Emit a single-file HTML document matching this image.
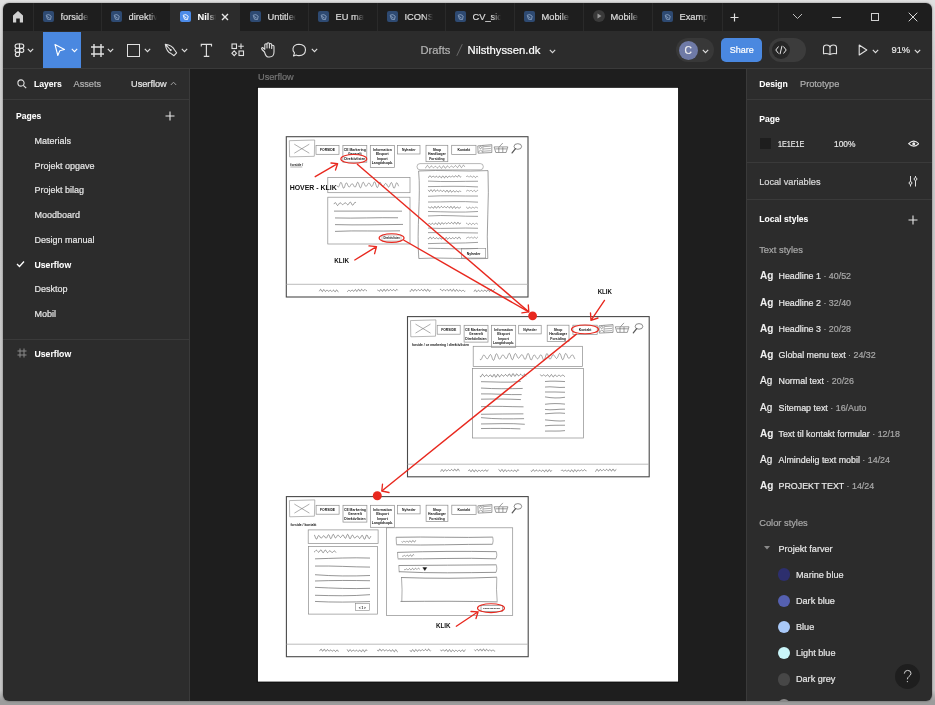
<!DOCTYPE html>
<html><head><meta charset="utf-8">
<style>
*{margin:0;padding:0;box-sizing:border-box}
html,body{width:935px;height:705px;overflow:hidden;background:#e6e6e6;font-family:"Liberation Sans",sans-serif}
#bg{position:absolute;left:0;top:0;width:935px;height:705px;background:linear-gradient(180deg,#e0e0e0 0px,#d0d0d0 60px,#c8c8c8 200px,#c6c6c6 690px,#9c9c9c 701px,#9c9c9c 705px)}
#shadow{position:absolute;left:3px;top:3px;width:929px;height:698px;border-radius:6px;box-shadow:0 0 2px rgba(0,0,0,.5)}
#win{position:absolute;left:0;top:0;width:935px;height:705px;clip-path:inset(3px 3px 4px 3px round 6px);overflow:hidden;will-change:transform}
.a{position:absolute}
.t{position:absolute;white-space:nowrap;line-height:normal;-webkit-text-stroke:0.2px currentColor}
.t[style*="font-weight:bold"]{-webkit-text-stroke:0.05px currentColor}
.tab{overflow:hidden}
.tab span{position:absolute;right:0;top:0;width:9px;height:100%}
</style></head><body>
<div id="bg"></div><div id="shadow"></div>
<div id="win">
<div class="a" style="left:0px;top:0px;width:935px;height:31px;background:#1e1e1e;"></div>
<div class="a" style="left:170px;top:0px;width:70px;height:31px;background:#2c2c2c;"></div>
<div class="a" style="left:33px;top:3px;width:1px;height:28px;background:#2a2a2a;"></div>
<div class="a" style="left:101px;top:3px;width:1px;height:28px;background:#2a2a2a;"></div>
<div class="a" style="left:308px;top:3px;width:1px;height:28px;background:#2a2a2a;"></div>
<div class="a" style="left:377px;top:3px;width:1px;height:28px;background:#2a2a2a;"></div>
<div class="a" style="left:445px;top:3px;width:1px;height:28px;background:#2a2a2a;"></div>
<div class="a" style="left:514px;top:3px;width:1px;height:28px;background:#2a2a2a;"></div>
<div class="a" style="left:583px;top:3px;width:1px;height:28px;background:#2a2a2a;"></div>
<div class="a" style="left:652px;top:3px;width:1px;height:28px;background:#2a2a2a;"></div>
<div class="a" style="left:722px;top:3px;width:1px;height:28px;background:#2a2a2a;"></div>
<div class="a" style="left:778px;top:3px;width:1px;height:28px;background:#2a2a2a;"></div>
<svg class="a" style="left:12px;top:10px" width="12" height="13" viewBox="0 0 12 13"><path d="M1 5.5 L6 1 L11 5.5 V12.5 H7.8 V8.5 H4.2 V12.5 H1 Z" fill="#d0d0d0"/></svg>
<div class="a" style="left:43px;top:11px;width:10.5px;height:10.5px;border-radius:2px;background:#2e4a72"></div>
<svg class="a" style="left:42.5px;top:10.5px" width="12" height="12"><path d="M3.2 4.2 Q6 2.5 8.2 5.2 L7.5 8.5 L4.5 8.2 Z M4.2 5.5 L6.5 7" stroke="#8aa0c0" stroke-width="0.9" fill="none"/></svg>
<div class="t tab" style="left:60.5px;top:12.38px;font-size:9.3px;width:28px;color:#dcdcdc;font-weight:normal">forside<span style="background:linear-gradient(90deg,rgba(0,0,0,0),#1e1e1e)"></span></div>
<div class="a" style="left:111px;top:11px;width:10.5px;height:10.5px;border-radius:2px;background:#2e4a72"></div>
<svg class="a" style="left:110.5px;top:10.5px" width="12" height="12"><path d="M3.2 4.2 Q6 2.5 8.2 5.2 L7.5 8.5 L4.5 8.2 Z M4.2 5.5 L6.5 7" stroke="#8aa0c0" stroke-width="0.9" fill="none"/></svg>
<div class="t tab" style="left:128.5px;top:12.38px;font-size:9.3px;width:28px;color:#dcdcdc;font-weight:normal">direktiv<span style="background:linear-gradient(90deg,rgba(0,0,0,0),#1e1e1e)"></span></div>
<div class="a" style="left:180px;top:11px;width:10.5px;height:10.5px;border-radius:2px;background:#4c8be8"></div>
<svg class="a" style="left:179.5px;top:10.5px" width="12" height="12"><path d="M3.2 4.2 Q6 2.5 8.2 5.2 L7.5 8.5 L4.5 8.2 Z M4.2 5.5 L6.5 7" stroke="#ffffff" stroke-width="0.9" fill="none"/></svg>
<div class="t tab" style="left:197.5px;top:12.38px;font-size:9.3px;width:18px;color:#ffffff;font-weight:bold">Nilsthyssen<span style="background:linear-gradient(90deg,rgba(0,0,0,0),#2c2c2c)"></span></div>
<div class="a" style="left:250px;top:11px;width:10.5px;height:10.5px;border-radius:2px;background:#2e4a72"></div>
<svg class="a" style="left:249.5px;top:10.5px" width="12" height="12"><path d="M3.2 4.2 Q6 2.5 8.2 5.2 L7.5 8.5 L4.5 8.2 Z M4.2 5.5 L6.5 7" stroke="#8aa0c0" stroke-width="0.9" fill="none"/></svg>
<div class="t tab" style="left:267.5px;top:12.38px;font-size:9.3px;width:28px;color:#dcdcdc;font-weight:normal">Untitled<span style="background:linear-gradient(90deg,rgba(0,0,0,0),#1e1e1e)"></span></div>
<div class="a" style="left:318px;top:11px;width:10.5px;height:10.5px;border-radius:2px;background:#2e4a72"></div>
<svg class="a" style="left:317.5px;top:10.5px" width="12" height="12"><path d="M3.2 4.2 Q6 2.5 8.2 5.2 L7.5 8.5 L4.5 8.2 Z M4.2 5.5 L6.5 7" stroke="#8aa0c0" stroke-width="0.9" fill="none"/></svg>
<div class="t tab" style="left:335.5px;top:12.38px;font-size:9.3px;width:28px;color:#dcdcdc;font-weight:normal">EU mærke<span style="background:linear-gradient(90deg,rgba(0,0,0,0),#1e1e1e)"></span></div>
<div class="a" style="left:387px;top:11px;width:10.5px;height:10.5px;border-radius:2px;background:#2e4a72"></div>
<svg class="a" style="left:386.5px;top:10.5px" width="12" height="12"><path d="M3.2 4.2 Q6 2.5 8.2 5.2 L7.5 8.5 L4.5 8.2 Z M4.2 5.5 L6.5 7" stroke="#8aa0c0" stroke-width="0.9" fill="none"/></svg>
<div class="t tab" style="left:404.5px;top:12.38px;font-size:9.3px;width:28px;color:#dcdcdc;font-weight:normal">ICONS<span style="background:linear-gradient(90deg,rgba(0,0,0,0),#1e1e1e)"></span></div>
<div class="a" style="left:455px;top:11px;width:10.5px;height:10.5px;border-radius:2px;background:#2e4a72"></div>
<svg class="a" style="left:454.5px;top:10.5px" width="12" height="12"><path d="M3.2 4.2 Q6 2.5 8.2 5.2 L7.5 8.5 L4.5 8.2 Z M4.2 5.5 L6.5 7" stroke="#8aa0c0" stroke-width="0.9" fill="none"/></svg>
<div class="t tab" style="left:472.5px;top:12.38px;font-size:9.3px;width:28px;color:#dcdcdc;font-weight:normal">CV_side<span style="background:linear-gradient(90deg,rgba(0,0,0,0),#1e1e1e)"></span></div>
<div class="a" style="left:524px;top:11px;width:10.5px;height:10.5px;border-radius:2px;background:#2e4a72"></div>
<svg class="a" style="left:523.5px;top:10.5px" width="12" height="12"><path d="M3.2 4.2 Q6 2.5 8.2 5.2 L7.5 8.5 L4.5 8.2 Z M4.2 5.5 L6.5 7" stroke="#8aa0c0" stroke-width="0.9" fill="none"/></svg>
<div class="t tab" style="left:541.5px;top:12.38px;font-size:9.3px;width:28px;color:#dcdcdc;font-weight:normal">Mobile<span style="background:linear-gradient(90deg,rgba(0,0,0,0),#1e1e1e)"></span></div>
<div class="a" style="left:593px;top:10px;width:12px;height:12px;border-radius:6px;background:#3a3a3a"></div>
<svg class="a" style="left:593px;top:10px" width="12" height="12"><path d="M4.5 3.5 L8.5 6 L4.5 8.5 Z" fill="#9a9a9a"/></svg>
<div class="t tab" style="left:610.5px;top:12.38px;font-size:9.3px;width:28px;color:#dcdcdc;font-weight:normal">Mobile<span style="background:linear-gradient(90deg,rgba(0,0,0,0),#1e1e1e)"></span></div>
<div class="a" style="left:662px;top:11px;width:10.5px;height:10.5px;border-radius:2px;background:#2e4a72"></div>
<svg class="a" style="left:661.5px;top:10.5px" width="12" height="12"><path d="M3.2 4.2 Q6 2.5 8.2 5.2 L7.5 8.5 L4.5 8.2 Z M4.2 5.5 L6.5 7" stroke="#8aa0c0" stroke-width="0.9" fill="none"/></svg>
<div class="t tab" style="left:679.5px;top:12.38px;font-size:9.3px;width:28px;color:#dcdcdc;font-weight:normal">Example<span style="background:linear-gradient(90deg,rgba(0,0,0,0),#1e1e1e)"></span></div>
<svg class="a" style="left:220.5px;top:13px" width="8" height="8"><path d="M1 1 L7 7 M7 1 L1 7" stroke="#e8e8e8" stroke-width="1.4"/></svg>
<svg class="a" style="left:730px;top:12.5px" width="9" height="9"><path d="M4.5 0.5 V8.5 M0.5 4.5 H8.5" stroke="#e0e0e0" stroke-width="1.2"/></svg>
<svg class="a" style="left:792px;top:13px" width="11" height="7"><path d="M1 1 L5.5 5.5 L10 1" stroke="#bdbdbd" stroke-width="1" fill="none"/></svg>
<div class="a" style="left:831.5px;top:16.5px;width:9.5px;height:1px;background:#cfcfcf"></div>
<div class="a" style="left:870.5px;top:12.5px;width:8.5px;height:8.5px;border:1px solid #cfcfcf"></div>
<svg class="a" style="left:907.5px;top:12px" width="10" height="10"><path d="M0.7 0.7 L9.3 9.3 M9.3 0.7 L0.7 9.3" stroke="#d8d8d8" stroke-width="1"/></svg>
<div class="a" style="left:0px;top:31px;width:935px;height:37px;background:#2c2c2c;"></div>
<div class="a" style="left:0px;top:68px;width:935px;height:1px;background:#3a3a3a;"></div>
<div class="a" style="left:43px;top:32px;width:38px;height:36px;background:#4a88e0;"></div>
<svg class="a" style="left:14px;top:43px" width="11" height="14" viewBox="0 0 11 14"><g fill="none" stroke="#e8e8e8" stroke-width="1.1"><path d="M5.5 1 H3.2 A2.1 2.1 0 0 0 3.2 5.2 H5.5 Z"/><path d="M5.5 1 H7.7 A2.1 2.1 0 0 1 7.7 5.2 H5.5 Z"/><path d="M5.5 5.2 H3.2 A2.1 2.1 0 0 0 3.2 9.4 H5.5 Z"/><circle cx="7.7" cy="7.3" r="2.1"/><path d="M5.5 9.4 H3.2 A2.1 2.1 0 1 0 5.5 11.5 Z"/></g></svg>
<svg class="a" style="left:27px;top:48px" width="7" height="5"><path d="M0.8 0.8 L3.5 3.6 L6.2 0.8" stroke="#e0e0e0" stroke-width="1.1" fill="none"/></svg>
<svg class="a" style="left:70.5px;top:48px" width="7" height="5"><path d="M0.8 0.8 L3.5 3.6 L6.2 0.8" stroke="#ffffff" stroke-width="1.1" fill="none"/></svg>
<svg class="a" style="left:107px;top:48px" width="7" height="5"><path d="M0.8 0.8 L3.5 3.6 L6.2 0.8" stroke="#e0e0e0" stroke-width="1.1" fill="none"/></svg>
<svg class="a" style="left:143.5px;top:48px" width="7" height="5"><path d="M0.8 0.8 L3.5 3.6 L6.2 0.8" stroke="#e0e0e0" stroke-width="1.1" fill="none"/></svg>
<svg class="a" style="left:181px;top:48px" width="7" height="5"><path d="M0.8 0.8 L3.5 3.6 L6.2 0.8" stroke="#e0e0e0" stroke-width="1.1" fill="none"/></svg>
<svg class="a" style="left:310.5px;top:48px" width="7" height="5"><path d="M0.8 0.8 L3.5 3.6 L6.2 0.8" stroke="#e0e0e0" stroke-width="1.1" fill="none"/></svg>
<svg class="a" style="left:53px;top:43px" width="13" height="14"><path d="M2 1.5 L11.5 6.5 L6.8 7.8 L4.8 12.5 Z" fill="none" stroke="#ffffff" stroke-width="1.1" stroke-linejoin="round"/></svg>
<svg class="a" style="left:90px;top:43px" width="15" height="15"><path d="M4 1 V14 M11 1 V14 M1 4 H14 M1 11 H14" stroke="#e0e0e0" stroke-width="1.4"/></svg>
<div class="a" style="left:127px;top:44px;width:13px;height:12.5px;border:1.2px solid #e0e0e0"></div>
<svg class="a" style="left:163px;top:43px" width="15" height="15"><path d="M2.3 1.3 Q9.2 2.3 11.6 7 L13.6 9.8 L11 12.7 L8.1 10.6 Q3.6 8.8 2.3 1.3 Z M2.3 1.3 L7.6 7" fill="none" stroke="#e0e0e0" stroke-width="1.1" stroke-linejoin="round"/><circle cx="7.7" cy="7.1" r="1.1" fill="#e0e0e0"/></svg>
<svg class="a" style="left:200px;top:43px" width="13" height="15"><path d="M1.3 3.6 V1.4 H11.5 V3.6 M6.4 1.4 V13.4 M3.8 13.4 H9.3" fill="none" stroke="#e0e0e0" stroke-width="1.15"/></svg>
<svg class="a" style="left:231px;top:43px" width="14" height="14"><g fill="none" stroke="#e0e0e0" stroke-width="1.1"><rect x="1" y="1" width="4.5" height="4.5"/><path d="M10 0.5 V6 M7.2 3.2 H12.8"/><path d="M3.2 7.8 L5.5 10.2 L3.2 12.6 L0.9 10.2 Z"/><rect x="8" y="8" width="4.5" height="4.5"/></g></svg>
<svg class="a" style="left:260px;top:42px" width="17" height="16"><path d="M4.5 10 L2 7.5 Q1 6 2.5 5.5 L4.8 7.3 V3 Q4.8 1.8 6 1.8 Q7 1.8 7 3 V6 V1.8 Q7 0.8 8.2 0.8 Q9.4 0.8 9.4 2 V6 V2.5 Q9.4 1.5 10.5 1.5 Q11.7 1.5 11.7 2.7 V6.5 V4.3 Q11.7 3.3 12.8 3.3 Q14 3.3 14 4.5 V10 Q14 15 9.5 15 H8 Q6 15 4.5 10 Z" fill="none" stroke="#e0e0e0" stroke-width="1.1" stroke-linejoin="round"/></svg>
<svg class="a" style="left:291px;top:43px" width="16" height="15"><path d="M2.5 13 L3.5 9.8 Q1.5 7.8 2 5.5 Q3 1.3 8 1.3 Q14.5 1.5 14.5 7 Q14.2 12.6 8 12.6 Q6.2 12.6 5.2 12 Z" fill="none" stroke="#e0e0e0" stroke-width="1.1" stroke-linejoin="round"/></svg>
<div class="t" style="left:420.50px;top:44.26px;font-size:11.2px;color:#b4b4b4;font-weight:normal;">Drafts</div>
<svg class="a" style="left:455px;top:43px" width="9" height="14"><path d="M7.3 1.2 L1.8 12.8" stroke="#6a6a6a" stroke-width="1"/></svg>
<div class="t" style="left:467.50px;top:44.17px;font-size:11.3px;color:#ffffff;font-weight:normal;">Nilsthyssen.dk</div>
<svg class="a" style="left:548.5px;top:48.5px" width="7" height="5"><path d="M0.8 0.8 L3.5 3.6 L6.2 0.8" stroke="#d8d8d8" stroke-width="1.1" fill="none"/></svg>
<div class="a" style="left:676px;top:38px;width:38px;height:24px;background:#383838;border-radius:12px;"></div>
<div class="a" style="left:678.6px;top:40.6px;width:19px;height:19px;border-radius:50%;background:#6f7aa6"></div>
<div class="t" style="left:684.50px;top:44.77px;font-size:10.2px;color:#f0f0f0;font-weight:normal;">C</div>
<svg class="a" style="left:702px;top:48.5px" width="7" height="5"><path d="M0.8 0.8 L3.5 3.6 L6.2 0.8" stroke="#e0e0e0" stroke-width="1.1" fill="none"/></svg>
<div class="a" style="left:721px;top:38px;width:41px;height:24px;background:#4a88e0;border-radius:5px;"></div>
<div class="t" style="left:729.80px;top:45.36px;font-size:9.0px;color:#ffffff;font-weight:normal;">Share</div>
<div class="a" style="left:769px;top:38px;width:37px;height:24px;background:#3c3c3c;border-radius:12px;"></div>
<div class="a" style="left:772px;top:41px;width:18px;height:18px;border-radius:9px;background:#262626"></div>
<svg class="a" style="left:775px;top:45px" width="12" height="10"><path d="M3.5 1.5 L0.8 5 L3.5 8.5 M8.5 1.5 L11.2 5 L8.5 8.5 M7 0.8 L5 9.2" fill="none" stroke="#e8e8e8" stroke-width="1"/></svg>
<svg class="a" style="left:822px;top:44px" width="16" height="12"><path d="M1.5 9.8 V3.6 Q1.5 1 4.6 1 Q7.8 1 8 3.6 Q8.2 1 11.4 1 Q14.5 1 14.5 3.6 V9.8 Q11 9 8 10.6 Q5 9 1.5 9.8 Z M8 3.6 V10.4" fill="none" stroke="#e0e0e0" stroke-width="1.1" stroke-linejoin="round"/></svg>
<svg class="a" style="left:857.5px;top:44px" width="10" height="12"><path d="M1.2 1 L8.8 6 L1.2 11 Z" fill="none" stroke="#e0e0e0" stroke-width="1.1" stroke-linejoin="round"/></svg>
<svg class="a" style="left:871.5px;top:48.5px" width="7" height="5"><path d="M0.8 0.8 L3.5 3.6 L6.2 0.8" stroke="#e0e0e0" stroke-width="1.1" fill="none"/></svg>
<div class="t" style="left:891.50px;top:45.08px;font-size:9.3px;color:#e8e8e8;font-weight:normal;">91%</div>
<svg class="a" style="left:914px;top:48.5px" width="7" height="5"><path d="M0.8 0.8 L3.5 3.6 L6.2 0.8" stroke="#e0e0e0" stroke-width="1.1" fill="none"/></svg>
<div class="a" style="left:0px;top:69px;width:189px;height:636px;background:#2c2c2c;"></div>
<div class="a" style="left:189px;top:69px;width:1px;height:636px;background:#3a3a3a;"></div>
<svg class="a" style="left:16.5px;top:79px" width="10" height="10"><circle cx="4" cy="4" r="3.1" fill="none" stroke="#e0e0e0" stroke-width="1.1"/><path d="M6.3 6.3 L9.2 9.2" stroke="#e0e0e0" stroke-width="1.2"/></svg>
<div class="t" style="left:34.00px;top:78.82px;font-size:8.6px;color:#ffffff;font-weight:bold;">Layers</div>
<div class="t" style="left:73.50px;top:79.07px;font-size:9.2px;color:#b0b0b0;font-weight:normal;">Assets</div>
<div class="t" style="left:131.00px;top:79.07px;font-size:9.2px;color:#e8e8e8;font-weight:normal;">Userflow</div>
<svg class="a" style="left:170px;top:81px" width="7" height="5"><path d="M0.8 4 L3.5 1.2 L6.2 4" stroke="#a0a0a0" stroke-width="1" fill="none"/></svg>
<div class="a" style="left:3px;top:99px;width:186px;height:1px;background:#3a3a3a;"></div>
<div class="t" style="left:16.00px;top:111.42px;font-size:8.6px;color:#ffffff;font-weight:bold;">Pages</div>
<svg class="a" style="left:164.5px;top:111px" width="10" height="10"><path d="M5 0.5 V9.5 M0.5 5 H9.5" stroke="#e8e8e8" stroke-width="1.1"/></svg>
<div class="t" style="left:34.50px;top:136.05px;font-size:9.0px;color:#e6e6e6;font-weight:normal;">Materials</div>
<div class="t" style="left:34.50px;top:160.75px;font-size:9.0px;color:#e6e6e6;font-weight:normal;">Projekt opgave</div>
<div class="t" style="left:34.50px;top:185.45px;font-size:9.0px;color:#e6e6e6;font-weight:normal;">Projekt bilag</div>
<div class="t" style="left:34.50px;top:210.15px;font-size:9.0px;color:#e6e6e6;font-weight:normal;">Moodboard</div>
<div class="t" style="left:34.50px;top:234.85px;font-size:9.0px;color:#e6e6e6;font-weight:normal;">Design manual</div>
<div class="t" style="left:34.50px;top:259.83px;font-size:8.7px;color:#ffffff;font-weight:bold;">Userflow</div>
<div class="t" style="left:34.50px;top:284.25px;font-size:9.0px;color:#e6e6e6;font-weight:normal;">Desktop</div>
<div class="t" style="left:34.50px;top:308.96px;font-size:9.0px;color:#e6e6e6;font-weight:normal;">Mobil</div>
<svg class="a" style="left:16px;top:260px" width="9" height="8"><path d="M1 4 L3.5 6.5 L8 1.5" stroke="#ffffff" stroke-width="1.3" fill="none"/></svg>
<div class="a" style="left:3px;top:339px;width:186px;height:1px;background:#3a3a3a;"></div>
<svg class="a" style="left:17px;top:348px" width="10" height="10"><path d="M3 0.5 V9.5 M7 0.5 V9.5 M0.5 3 H9.5 M0.5 7 H9.5" stroke="#8a8a8a" stroke-width="1"/></svg>
<div class="t" style="left:34.50px;top:348.53px;font-size:8.7px;color:#ffffff;font-weight:bold;">Userflow</div>
<div class="a" style="left:190px;top:69px;width:556px;height:636px;background:#1e1e1e;"></div>
<div class="t" style="left:258.00px;top:71.77px;font-size:9.2px;color:#757575;font-weight:normal;">Userflow</div>
<div class="a" style="left:746px;top:69px;width:1px;height:636px;background:#3a3a3a;"></div>
<div class="a" style="left:747px;top:69px;width:188px;height:636px;background:#2c2c2c;"></div>
<div class="t" style="left:759.20px;top:78.82px;font-size:8.6px;color:#ffffff;font-weight:bold;">Design</div>
<div class="t" style="left:800.00px;top:79.07px;font-size:9.2px;color:#b0b0b0;font-weight:normal;">Prototype</div>
<div class="a" style="left:747px;top:99px;width:188px;height:1px;background:#3a3a3a;"></div>
<div class="t" style="left:759.20px;top:114.12px;font-size:8.6px;color:#ffffff;font-weight:bold;">Page</div>
<div class="a" style="left:760px;top:138px;width:11px;height:11px;background:#1e1e1e;"></div>
<div class="t" style="left:778.00px;top:138.75px;font-size:9.0px;color:#e6e6e6;font-weight:normal;transform:scaleX(0.8);transform-origin:0 0;">1E1E1E</div>
<div class="t" style="left:834.00px;top:139.30px;font-size:8.4px;color:#e6e6e6;font-weight:normal;">100%</div>
<svg class="a" style="left:907.8px;top:140px" width="11.5" height="7.5"><path d="M0.7 3.7 Q5.7 -1.3 10.8 3.7 Q5.7 8.7 0.7 3.7 Z" fill="none" stroke="#ececec" stroke-width="1.1"/><circle cx="5.75" cy="3.7" r="1.5" fill="#ececec"/></svg>
<div class="a" style="left:747px;top:162px;width:188px;height:1px;background:#3a3a3a;"></div>
<div class="t" style="left:759.20px;top:176.97px;font-size:9.2px;color:#dadada;font-weight:normal;">Local variables</div>
<svg class="a" style="left:907px;top:175px" width="12" height="12"><g fill="none" stroke="#e0e0e0" stroke-width="1"><path d="M3.5 1 V6.5 M3.5 9.5 V11.5 M8.5 1 V2.5 M8.5 5.5 V11.5"/><circle cx="3.5" cy="8" r="1.4"/><circle cx="8.5" cy="4" r="1.4"/></g></svg>
<div class="a" style="left:747px;top:199px;width:188px;height:1px;background:#3a3a3a;"></div>
<div class="t" style="left:759.20px;top:214.22px;font-size:8.6px;color:#ffffff;font-weight:bold;">Local styles</div>
<svg class="a" style="left:908px;top:214.5px" width="10" height="10"><path d="M5 0.5 V9.5 M0.5 5 H9.5" stroke="#e8e8e8" stroke-width="1.1"/></svg>
<div class="t" style="left:759.20px;top:244.49px;font-size:9.4px;color:#a8a8a8;font-weight:normal;">Text styles</div>
<div class="t" style="left:760.00px;top:270.25px;font-size:10.0px;color:#f0f0f0;font-weight:bold;">Ag</div>
<div class="t" style="left:778.5px;top:271.25px;font-size:8.9px;color:#e8e8e8">Headline 1<span style="color:#a8a8a8"> · 40/52</span></div>
<div class="t" style="left:760.00px;top:296.50px;font-size:10.0px;color:#f0f0f0;font-weight:bold;">Ag</div>
<div class="t" style="left:778.5px;top:297.50px;font-size:8.9px;color:#e8e8e8">Headline 2<span style="color:#a8a8a8"> · 32/40</span></div>
<div class="t" style="left:760.00px;top:322.75px;font-size:10.0px;color:#f0f0f0;font-weight:bold;">Ag</div>
<div class="t" style="left:778.5px;top:323.75px;font-size:8.9px;color:#e8e8e8">Headline 3<span style="color:#a8a8a8"> · 20/28</span></div>
<div class="t" style="left:760.00px;top:349.00px;font-size:10.0px;color:#f0f0f0;font-weight:bold;">Ag</div>
<div class="t" style="left:778.5px;top:350.00px;font-size:8.9px;color:#e8e8e8">Global menu text<span style="color:#a8a8a8"> · 24/32</span></div>
<div class="t" style="left:760.00px;top:375.25px;font-size:10.0px;color:#f0f0f0;font-weight:normal;">Ag</div>
<div class="t" style="left:778.5px;top:376.25px;font-size:8.9px;color:#e8e8e8">Normal text<span style="color:#a8a8a8"> · 20/26</span></div>
<div class="t" style="left:760.00px;top:401.50px;font-size:10.0px;color:#f0f0f0;font-weight:normal;">Ag</div>
<div class="t" style="left:778.5px;top:402.50px;font-size:8.9px;color:#e8e8e8">Sitemap text<span style="color:#a8a8a8"> · 16/Auto</span></div>
<div class="t" style="left:760.00px;top:427.75px;font-size:10.0px;color:#f0f0f0;font-weight:bold;">Ag</div>
<div class="t" style="left:778.5px;top:428.75px;font-size:8.9px;color:#e8e8e8">Text til kontakt formular<span style="color:#a8a8a8"> · 12/18</span></div>
<div class="t" style="left:760.00px;top:454.00px;font-size:10.0px;color:#f0f0f0;font-weight:normal;">Ag</div>
<div class="t" style="left:778.5px;top:455.00px;font-size:8.9px;color:#e8e8e8">Almindelig text mobil<span style="color:#a8a8a8"> · 14/24</span></div>
<div class="t" style="left:760.00px;top:480.25px;font-size:10.0px;color:#f0f0f0;font-weight:bold;">Ag</div>
<div class="t" style="left:778.5px;top:481.25px;font-size:8.9px;color:#e8e8e8">PROJEKT TEXT<span style="color:#a8a8a8"> · 14/24</span></div>
<div class="t" style="left:759.20px;top:517.78px;font-size:9.3px;color:#a8a8a8;font-weight:normal;">Color styles</div>
<svg class="a" style="left:764px;top:546px" width="6" height="4"><path d="M0 0 H6 L3 3.5 Z" fill="#8a8a8a"/></svg>
<div class="t" style="left:778.50px;top:544.06px;font-size:9.1px;color:#e6e6e6;font-weight:normal;">Projekt farver</div>
<div class="a" style="left:777.5px;top:568.30px;width:12.6px;height:12.6px;border-radius:50%;background:#2d2f6e"></div>
<div class="t" style="left:796.00px;top:569.56px;font-size:9.1px;color:#e6e6e6;font-weight:normal;">Marine blue</div>
<div class="a" style="left:777.5px;top:594.50px;width:12.6px;height:12.6px;border-radius:50%;background:#5560b0"></div>
<div class="t" style="left:796.00px;top:595.76px;font-size:9.1px;color:#e6e6e6;font-weight:normal;">Dark blue</div>
<div class="a" style="left:777.5px;top:620.70px;width:12.6px;height:12.6px;border-radius:50%;background:#a9c9f8"></div>
<div class="t" style="left:796.00px;top:621.96px;font-size:9.1px;color:#e6e6e6;font-weight:normal;">Blue</div>
<div class="a" style="left:777.5px;top:646.90px;width:12.6px;height:12.6px;border-radius:50%;background:#c9f5f9"></div>
<div class="t" style="left:796.00px;top:648.16px;font-size:9.1px;color:#e6e6e6;font-weight:normal;">Light blue</div>
<div class="a" style="left:777.5px;top:673.10px;width:12.6px;height:12.6px;border-radius:50%;background:#474747"></div>
<div class="t" style="left:796.00px;top:674.36px;font-size:9.1px;color:#e6e6e6;font-weight:normal;">Dark grey</div>
<div class="a" style="left:777.5px;top:699.30px;width:12.6px;height:12.6px;border-radius:50%;background:#8a8a8a"></div>
<div class="a" style="left:895px;top:664px;width:25px;height:25px;border-radius:50%;background:#1e1e1e"></div>
<svg class="a" style="left:0;top:0" width="935" height="705"><path d="M904.3,673.6 Q904.6,670.4 907.6,670.4 Q910.9,670.4 911,673.2 Q911,675.2 908.8,676.6 Q907.5,677.5 907.4,679.3" fill="none" stroke="#d4d4d4" stroke-width="1"/><circle cx="907.4" cy="681.6" r="0.65" fill="#d4d4d4"/></svg>
<svg class="a" style="left:0;top:0" width="935" height="705" viewBox="0 0 935 705"><rect x="256.9" y="87" width="422" height="595.5" fill="#0a0a0a"/><rect x="257.9" y="87.8" width="420.2" height="593.8" fill="#ffffff"/><rect x="286.30" y="136.70" width="241.70" height="160.30" rx="0" stroke="#4a4a4a" stroke-width="1.1" fill="none"/><path d="M289.30,140.70 L314.70,140.00 L314.30,156.30 L289.60,156.90 Z" stroke="#888" stroke-width="0.6" fill="none" /><path d="M294.30,144.20 L309.30,153.20 M309.30,144.20 L294.30,153.20" stroke="#777" stroke-width="0.6" fill="none" /><rect x="316.00" y="145.40" width="23.00" height="8.90" rx="0" stroke="#8c8c8c" stroke-width="0.7" fill="none"/><text x="327.50" y="150.90" font-size="3.4" text-anchor="middle" font-weight="bold" fill="#111" font-family="Liberation Sans">FORSIDE</text><rect x="342.90" y="145.40" width="23.90" height="16.80" rx="0" stroke="#8c8c8c" stroke-width="0.7" fill="none"/><text x="354.80" y="150.90" font-size="3.4" text-anchor="middle" font-weight="bold" fill="#111" font-family="Liberation Sans">CE Markering</text><text x="354.80" y="155.30" font-size="3.4" text-anchor="middle" font-weight="bold" fill="#111" font-family="Liberation Sans">Generelt</text><text x="354.80" y="160.00" font-size="3.4" text-anchor="middle" font-weight="bold" fill="#111" font-family="Liberation Sans">Direktivlisten</text><rect x="370.30" y="145.40" width="24.20" height="22.00" rx="0" stroke="#8c8c8c" stroke-width="0.7" fill="none"/><text x="382.40" y="150.90" font-size="3.4" text-anchor="middle" font-weight="bold" fill="#111" font-family="Liberation Sans">Information</text><text x="382.40" y="155.30" font-size="3.4" text-anchor="middle" font-weight="bold" fill="#111" font-family="Liberation Sans">Eksport</text><text x="382.40" y="159.70" font-size="3.4" text-anchor="middle" font-weight="bold" fill="#111" font-family="Liberation Sans">Import</text><text x="382.40" y="164.10" font-size="3.4" text-anchor="middle" font-weight="bold" fill="#111" font-family="Liberation Sans">Langtidsopb.</text><rect x="397.50" y="145.40" width="22.50" height="8.60" rx="0" stroke="#8c8c8c" stroke-width="0.7" fill="none"/><text x="408.80" y="150.90" font-size="3.4" text-anchor="middle" font-weight="bold" fill="#111" font-family="Liberation Sans">Nyheder</text><rect x="426.00" y="145.30" width="21.80" height="16.40" rx="0" stroke="#8c8c8c" stroke-width="0.7" fill="none"/><text x="436.90" y="150.90" font-size="3.4" text-anchor="middle" font-weight="bold" fill="#111" font-family="Liberation Sans">Shop</text><text x="436.90" y="155.30" font-size="3.4" text-anchor="middle" font-weight="bold" fill="#111" font-family="Liberation Sans">Håndbøger</text><text x="436.90" y="159.70" font-size="3.4" text-anchor="middle" font-weight="bold" fill="#111" font-family="Liberation Sans">Forsiding</text><rect x="451.70" y="145.30" width="24.30" height="9.20" rx="0" stroke="#8c8c8c" stroke-width="0.7" fill="none"/><text x="463.80" y="150.90" font-size="3.4" text-anchor="middle" font-weight="bold" fill="#111" font-family="Liberation Sans">Kontakt</text><path d="M477.80,145.90 L481.80,145.50 L491.80,144.70 L491.80,152.50 L478.10,153.20 Z" stroke="#5a5a5a" stroke-width="0.6" fill="none" /><circle cx="480.50" cy="147.50" r="1.1" stroke="#5a5a5a" stroke-width="0.5" fill="none"/><path d="M478.60,152.20 Q480.50,148.20 482.60,152.20 M483.30,146.70 L490.80,146.20 M483.30,149.00 L490.80,148.50 M483.50,151.20 L490.80,150.70 M482.90,145.50 L482.90,152.70" stroke="#5a5a5a" stroke-width="0.5" fill="none" /><path d="M494.10,146.90 L507.80,146.90 L506.10,152.50 L495.80,152.50 Z M495.30,148.90 L506.80,148.90 M498.80,147.20 L498.80,152.20 M502.80,147.20 L502.80,152.20 M499.30,146.70 L502.80,143.00" stroke="#5a5a5a" stroke-width="0.6" fill="none" /><ellipse cx="517.80" cy="146.50" rx="3.8" ry="2.8" stroke="#5a5a5a" stroke-width="0.7" fill="none"/><path d="M515.50,148.70 L512.10,152.90" stroke="#5a5a5a" stroke-width="1.3" fill="none" stroke-linecap="round"/><path d="M286.30,284.30 H528.00" stroke="#aaa" stroke-width="0.8" fill="none" /><path d="M319.30,291.24 L319.63,290.80 L319.97,290.15 L320.30,289.56 L320.63,289.31 L320.97,289.50 L321.30,290.08 L321.63,290.80 L321.97,291.38 L322.30,291.56 L322.63,291.30 L322.97,290.72 L323.30,290.07 L323.63,289.64 L323.97,289.60 L324.30,289.96 L324.63,290.54 L324.97,291.12 L325.30,291.45 L325.63,291.43 L325.97,291.10 L326.30,290.63 L326.63,290.21 L326.97,290.03 L327.30,290.13 L327.63,290.46 L327.97,290.88 L328.30,291.22 L328.63,291.36 L328.97,291.26 L329.30,290.98 L329.63,290.63 L329.97,290.37 L330.30,290.28 L330.63,290.42 L330.97,290.74 L331.30,291.12 L331.63,291.41 L331.97,291.49 L332.30,291.31 L332.63,290.93 L332.97,290.49 L333.30,290.19 L333.63,290.16 L333.97,290.45 L334.30,290.96 L334.63,291.48 L334.97,291.79 L335.30,291.74 L335.63,291.32 L335.97,290.70 L336.30,290.12 L336.63,289.85 L336.97,290.00 L337.30,290.54 L337.63,291.23 L337.97,291.78 L338.30,291.96" stroke="#505050" stroke-width="0.6" fill="none" stroke-linejoin="round"/><path d="M347.00,291.41 L347.33,291.50 L347.67,291.32 L348.00,290.96 L348.33,290.57 L348.67,290.29 L349.00,290.23 L349.33,290.40 L349.67,290.71 L350.00,291.04 L350.33,291.26 L350.67,291.26 L351.00,291.04 L351.33,290.67 L351.67,290.29 L352.00,290.04 L352.33,290.04 L352.67,290.30 L353.00,290.73 L353.33,291.14 L353.67,291.36 L354.00,291.26 L354.33,290.85 L354.67,290.27 L355.00,289.76 L355.33,289.54 L355.67,289.72 L356.00,290.23 L356.33,290.87 L356.67,291.35 L357.00,291.46 L357.33,291.13 L357.67,290.48 L358.00,289.78 L358.33,289.31 L358.67,289.28 L359.00,289.67 L359.33,290.33 L359.67,290.96 L360.00,291.29 L360.33,291.19 L360.67,290.71 L361.00,290.07 L361.33,289.53 L361.67,289.29 L362.00,289.44 L362.33,289.88 L362.67,290.40 L363.00,290.79 L363.33,290.90 L363.67,290.70 L364.00,290.29 L364.33,289.86 L364.67,289.57 L365.00,289.52 L365.33,289.71 L365.67,290.05 L366.00,290.40 L366.33,290.62 L366.67,290.63 L367.00,290.42" stroke="#505050" stroke-width="0.6" fill="none" stroke-linejoin="round"/><path d="M377.30,290.10 L377.64,289.94 L377.98,290.06 L378.31,290.41 L378.65,290.87 L378.99,291.22 L379.33,291.29 L379.67,291.02 L380.01,290.49 L380.35,289.91 L380.68,289.53 L381.02,289.52 L381.36,289.91 L381.70,290.54 L382.04,291.13 L382.38,291.41 L382.71,291.23 L383.05,290.67 L383.39,289.94 L383.73,289.36 L384.07,289.18 L384.41,289.46 L384.74,290.08 L385.08,290.76 L385.42,291.19 L385.76,291.20 L386.10,290.79 L386.44,290.15 L386.77,289.56 L387.11,289.27 L387.45,289.36 L387.79,289.77 L388.13,290.31 L388.47,290.73 L388.80,290.87 L389.14,290.69 L389.48,290.30 L389.82,289.86 L390.16,289.56 L390.50,289.50 L390.83,289.70 L391.17,290.05 L391.51,290.40 L391.85,290.62 L392.19,290.62 L392.53,290.40 L392.86,290.06 L393.20,289.72 L393.54,289.54 L393.88,289.60 L394.22,289.89 L394.56,290.30 L394.89,290.68 L395.23,290.85 L395.57,290.72 L395.91,290.33 L396.25,289.83 L396.59,289.44 L396.92,289.35 L397.26,289.63 L397.60,290.19" stroke="#505050" stroke-width="0.6" fill="none" stroke-linejoin="round"/><path d="M409.70,290.86 L410.04,291.35 L410.37,291.42 L410.71,291.04 L411.05,290.36 L411.39,289.66 L411.72,289.25 L412.06,289.28 L412.40,289.73 L412.73,290.37 L413.07,290.93 L413.41,291.17 L413.75,291.00 L414.08,290.51 L414.42,289.93 L414.76,289.49 L415.09,289.37 L415.43,289.57 L415.77,290.00 L416.10,290.45 L416.44,290.73 L416.78,290.75 L417.12,290.51 L417.45,290.13 L417.79,289.77 L418.13,289.56 L418.46,289.59 L418.80,289.83 L419.14,290.18 L419.48,290.50 L419.81,290.66 L420.15,290.59 L420.49,290.31 L420.82,289.92 L421.16,289.59 L421.50,289.46 L421.84,289.61 L422.17,289.99 L422.51,290.47 L422.85,290.84 L423.18,290.94 L423.52,290.69 L423.86,290.18 L424.20,289.63 L424.53,289.27 L424.87,289.30 L425.21,289.72 L425.54,290.37 L425.88,290.99 L426.22,291.31 L426.55,291.18 L426.89,290.65 L427.23,289.95 L427.57,289.39 L427.90,289.22 L428.24,289.52 L428.58,290.16 L428.91,290.86 L429.25,291.34 L429.59,291.40 L429.93,291.04 L430.26,290.45 L430.60,289.88" stroke="#505050" stroke-width="0.6" fill="none" stroke-linejoin="round"/><path d="M440.00,289.99 L440.34,289.50 L440.67,289.32 L441.01,289.51 L441.35,289.95 L441.69,290.43 L442.02,290.76 L442.36,290.81 L442.70,290.58 L443.04,290.18 L443.37,289.79 L443.71,289.55 L444.05,289.56 L444.39,289.79 L444.72,290.14 L445.06,290.47 L445.40,290.64 L445.73,290.59 L446.07,290.33 L446.41,289.97 L446.75,289.64 L447.08,289.49 L447.42,289.61 L447.76,289.95 L448.10,290.40 L448.43,290.77 L448.77,290.89 L449.11,290.68 L449.45,290.22 L449.78,289.69 L450.12,289.32 L450.46,289.31 L450.79,289.68 L451.13,290.30 L451.47,290.91 L451.81,291.26 L452.14,291.17 L452.48,290.68 L452.82,289.99 L453.16,289.42 L453.49,289.20 L453.83,289.46 L454.17,290.08 L454.51,290.80 L454.84,291.32 L455.18,291.42 L455.52,291.09 L455.85,290.48 L456.19,289.88 L456.53,289.54 L456.87,289.60 L457.20,290.02 L457.54,290.60 L457.88,291.10 L458.22,291.33 L458.55,291.21 L458.89,290.85 L459.23,290.40 L459.57,290.07 L459.90,289.99 L460.24,290.17 L460.58,290.53 L460.91,290.93 L461.25,291.20 L461.59,291.25 L461.93,291.08 L462.26,290.76 L462.60,290.43 L462.94,290.22 L463.28,290.24 L463.61,290.49 L463.95,290.88 L464.29,291.26 L464.63,291.48 L464.96,291.42 L465.30,291.10" stroke="#505050" stroke-width="0.6" fill="none" stroke-linejoin="round"/><path d="M474.00,291.67 L474.33,291.07 L474.67,290.39 L475.00,289.92 L475.33,289.86 L475.67,290.22 L476.00,290.83 L476.33,291.43 L476.67,291.78 L477.00,291.75 L477.33,291.38 L477.67,290.84 L478.00,290.37 L478.33,290.14 L478.67,290.24 L479.00,290.59 L479.33,291.03 L479.67,291.38 L480.00,291.50 L480.33,291.38 L480.67,291.06 L481.00,290.68 L481.33,290.39 L481.67,290.30 L482.00,290.43 L482.33,290.73 L482.67,291.07 L483.00,291.32 L483.33,291.37 L483.67,291.18 L484.00,290.81 L484.33,290.40 L484.67,290.11 L485.00,290.07 L485.33,290.32 L485.67,290.76 L486.00,291.22 L486.33,291.49 L486.67,291.43 L487.00,291.04 L487.33,290.44 L487.67,289.88 L488.00,289.61 L488.33,289.74 L488.67,290.23 L489.00,290.89 L489.33,291.42 L489.67,291.59 L490.00,291.31 L490.33,290.68 L490.67,289.96 L491.00,289.45 L491.33,289.36 L491.67,289.70 L492.00,290.33 L492.33,290.95 L492.67,291.32 L493.00,291.28 L493.33,290.85 L493.67,290.24 L494.00,289.70 L494.33,289.43 L494.67,289.52 L495.00,289.90" stroke="#505050" stroke-width="0.6" fill="none" stroke-linejoin="round"/><text x="290.30" y="166.30" font-size="3.0" text-anchor="start" font-weight="bold" fill="#111" font-family="Liberation Sans" textLength="13" lengthAdjust="spacingAndGlyphs">forside /</text><path d="M290.30,167.00 H302.30" stroke="#444" stroke-width="0.4" fill="none" /><rect x="327.80" y="177.40" width="82.20" height="15.30" rx="0" stroke="#8c8c8c" stroke-width="0.7" fill="none"/><path d="M337.00,185.62 L337.33,186.27 L337.67,186.79 L338.00,187.09 L338.33,187.12 L338.67,186.83 L339.00,186.27 L339.33,185.47 L339.67,184.56 L340.00,183.67 L340.34,182.92 L340.67,182.46 L341.00,182.37 L341.34,182.67 L341.67,183.35 L342.00,184.31 L342.34,185.41 L342.67,186.50 L343.00,187.42 L343.34,188.02 L343.67,188.22 L344.00,188.00 L344.34,187.40 L344.67,186.52 L345.00,185.50 L345.34,184.50 L345.67,183.65 L346.00,183.08 L346.34,182.86 L346.67,182.98 L347.01,183.40 L347.34,184.06 L347.67,184.83 L348.01,185.59 L348.34,186.26 L348.67,186.74 L349.01,186.99 L349.34,186.99 L349.67,186.77 L350.01,186.37 L350.34,185.85 L350.67,185.27 L351.01,184.71 L351.34,184.23 L351.67,183.89 L352.01,183.72 L352.34,183.75 L352.68,183.98 L353.01,184.39 L353.34,184.94 L353.68,185.57 L354.01,186.20 L354.34,186.73 L354.68,187.08 L355.01,187.18 L355.34,186.99 L355.68,186.51 L356.01,185.77 L356.34,184.88 L356.68,183.95 L357.01,183.11 L357.34,182.51 L357.68,182.24 L358.01,182.36 L358.34,182.86 L358.68,183.69 L359.01,184.72 L359.35,185.81 L359.68,186.78 L360.01,187.49 L360.35,187.82 L360.68,187.74 L361.01,187.25 L361.35,186.43 L361.68,185.41 L362.01,184.35 L362.35,183.40 L362.68,182.68 L363.01,182.29 L363.35,182.26 L363.68,182.57 L364.01,183.15 L364.35,183.89 L364.68,184.67 L365.02,185.39 L365.35,185.95 L365.68,186.28 L366.02,186.37 L366.35,186.21 L366.68,185.86 L367.02,185.36 L367.35,184.78 L367.68,184.20 L368.02,183.69 L368.35,183.29 L368.68,183.06 L369.02,183.02 L369.35,183.19 L369.68,183.54 L370.02,184.04 L370.35,184.65 L370.68,185.28 L371.02,185.86 L371.35,186.29 L371.69,186.50 L372.02,186.43 L372.35,186.08 L372.69,185.46 L373.02,184.65 L373.35,183.76 L373.69,182.90 L374.02,182.23 L374.35,181.85 L374.69,181.83 L375.02,182.22 L375.35,182.95 L375.69,183.94 L376.02,185.04 L376.35,186.10 L376.69,186.95 L377.02,187.47 L377.36,187.58 L377.69,187.26 L378.02,186.59 L378.36,185.65 L378.69,184.61 L379.02,183.61 L379.36,182.81 L379.69,182.31 L380.02,182.17 L380.36,182.39 L380.69,182.92 L381.02,183.65 L381.36,184.48 L381.69,185.29 L382.02,185.96 L382.36,186.42 L382.69,186.63 L383.02,186.59 L383.36,186.33 L383.69,185.89 L384.03,185.35 L384.36,184.78 L384.69,184.26 L385.03,183.84 L385.36,183.57 L385.69,183.49 L386.03,183.60 L386.36,183.91 L386.69,184.38 L387.03,184.97 L387.36,185.61 L387.69,186.22 L388.03,186.72 L388.36,187.03 L388.69,187.08 L389.03,186.85 L389.36,186.35 L389.70,185.63 L390.03,184.78 L390.36,183.92 L390.70,183.18 L391.03,182.69 L391.36,182.54 L391.70,182.77 L392.03,183.37 L392.36,184.27 L392.70,185.34 L393.03,186.42 L393.36,187.36 L393.70,188.02 L394.03,188.28 L394.36,188.12 L394.70,187.56 L395.03,186.70 L395.36,185.66 L395.70,184.60 L396.03,183.68 L396.37,183.03 L396.70,182.73 L397.03,182.80 L397.37,183.21 L397.70,183.87 L398.03,184.68 L398.37,185.50 L398.70,186.23" stroke="#666" stroke-width="0.6" fill="none" stroke-linejoin="round"/><rect x="327.80" y="197.20" width="82.20" height="46.80" rx="0" stroke="#8c8c8c" stroke-width="0.7" fill="none"/><path d="M334.00,204.13 L334.33,203.48 L334.67,202.94 L335.00,202.61 L335.33,202.55 L335.67,202.77 L336.00,203.23 L336.33,203.83 L336.67,204.46 L337.00,205.00 L337.33,205.35 L337.67,205.47 L338.00,205.32 L338.33,204.96 L338.67,204.45 L339.00,203.89 L339.33,203.38 L339.67,203.00 L340.00,202.81 L340.33,202.81 L340.67,202.99 L341.00,203.30 L341.33,203.68 L341.67,204.05 L342.00,204.35 L342.33,204.54 L342.67,204.60 L343.00,204.52 L343.33,204.32 L343.67,204.02 L344.00,203.68 L344.33,203.34 L344.67,203.06 L345.00,202.87 L345.33,202.82 L345.67,202.91 L346.00,203.14 L346.33,203.49 L346.67,203.89 L347.00,204.29 L347.33,204.60 L347.67,204.77 L348.00,204.74 L348.33,204.50 L348.67,204.08 L349.00,203.54 L349.33,202.98 L349.67,202.49 L350.00,202.18 L350.33,202.11 L350.67,202.31 L351.00,202.74 L351.33,203.35 L351.67,204.01 L352.00,204.61 L352.33,205.04 L352.67,205.22 L353.00,205.11 L353.33,204.75 L353.67,204.21 L354.00,203.58 L354.33,202.99 L354.67,202.55 L355.00,202.32 L355.33,202.34 L355.67,202.59 L356.00,203.01" stroke="#555" stroke-width="0.6" fill="none" stroke-linejoin="round"/><path d="M334.00,211.11 C356.67,211.39 379.33,210.78 402.00,211.16" stroke="#5c5c5c" stroke-width="0.65" fill="none" /><path d="M335.00,217.94 C356.00,218.55 377.00,217.37 398.00,217.77" stroke="#5c5c5c" stroke-width="0.65" fill="none" /><path d="M335.00,224.61 C357.67,225.25 380.33,224.63 403.00,224.41" stroke="#5c5c5c" stroke-width="0.65" fill="none" /><path d="M335.00,231.40 C356.67,230.24 378.33,231.60 400.00,230.82" stroke="#5c5c5c" stroke-width="0.65" fill="none" /><rect x="382.00" y="235.00" width="19.00" height="6.00" rx="0" stroke="#888" stroke-width="0.5" fill="none"/><text x="391.60" y="239.20" font-size="2.6" text-anchor="middle" font-weight="bold" fill="#111" font-family="Liberation Sans">Direktivlisten</text><ellipse cx="391.6" cy="238.1" rx="12.5" ry="4.3" stroke="#e8281e" stroke-width="1.1" fill="none"/><rect x="417.00" y="163.60" width="66.30" height="6.20" rx="3" stroke="#888" stroke-width="0.6" fill="none"/><path d="M425.00,167.54 L425.33,167.83 L425.67,167.78 L426.00,167.40 L426.33,166.80 L426.67,166.15 L427.00,165.63 L427.33,165.40 L427.67,165.51 L428.00,165.93 L428.33,166.55 L428.67,167.18 L429.00,167.66 L429.33,167.88 L429.67,167.79 L430.00,167.45 L430.33,166.96 L430.67,166.47 L431.00,166.12 L431.33,165.99 L431.67,166.10 L432.00,166.40 L432.33,166.80 L432.67,167.21 L433.00,167.51 L433.33,167.65 L433.67,167.60 L434.00,167.39 L434.33,167.08 L434.67,166.76 L435.00,166.50 L435.33,166.38 L435.67,166.42 L436.00,166.62 L436.33,166.95 L436.67,167.33 L437.00,167.66 L437.33,167.85 L437.67,167.83 L438.00,167.61 L438.33,167.21 L438.67,166.75 L439.00,166.34 L439.33,166.10 L439.67,166.13 L440.00,166.43 L440.33,166.94 L440.67,167.53 L441.00,168.03 L441.33,168.30 L441.67,168.24 L442.00,167.87 L442.33,167.26 L442.67,166.60 L443.00,166.05 L443.33,165.78 L443.67,165.85 L444.00,166.25 L444.33,166.86 L444.67,167.50 L445.00,168.00 L445.33,168.21 L445.67,168.10 L446.00,167.70 L446.33,167.13 L446.67,166.56 L447.00,166.13 L447.33,165.94 L447.67,166.03 L448.00,166.34 L448.33,166.77 L448.67,167.19 L449.00,167.50 L449.33,167.61 L449.67,167.52 L450.00,167.26 L450.33,166.89 L450.67,166.53 L451.00,166.24 L451.33,166.10 L451.67,166.12 L452.00,166.31 L452.33,166.60 L452.67,166.92 L453.00,167.19 L453.33,167.33 L453.67,167.30 L454.00,167.07 L454.33,166.70 L454.67,166.27 L455.00,165.89 L455.33,165.66 L455.67,165.66 L456.00,165.91 L456.33,166.35 L456.67,166.87 L457.00,167.32 L457.33,167.56 L457.67,167.51 L458.00,167.16 L458.33,166.58 L458.67,165.94 L459.00,165.40 L459.33,165.11 L459.67,165.17 L460.00,165.56 L460.33,166.17 L460.67,166.83 L461.00,167.35 L461.33,167.59 L461.67,167.49 L462.00,167.08 L462.33,166.48 L462.67,165.87 L463.00,165.40 L463.33,165.20 L463.67,165.30 L464.00,165.66 L464.33,166.16 L464.67,166.66 L465.00,167.03" stroke="#666" stroke-width="0.55" fill="none" stroke-linejoin="round"/><path d="M418.6,171 C421,195 416.5,230 418.8,258.5 C440,257 465,259.5 487.8,258.5 C486,230 489.5,200 488,170.6 C465,172 440,169.5 418.6,171 Z" stroke="#777" stroke-width="0.7" fill="none" /><path d="M428.00,177.09 L428.33,177.40 L428.67,177.30 L429.00,176.88 L429.33,176.31 L429.67,175.85 L430.00,175.69 L430.33,175.89 L430.67,176.33 L431.00,176.84 L431.33,177.21 L431.67,177.31 L432.00,177.13 L432.33,176.77 L432.67,176.39 L433.00,176.16 L433.33,176.15 L433.67,176.37 L434.00,176.71 L434.33,177.04 L434.67,177.24 L435.00,177.24 L435.33,177.05 L435.67,176.75 L436.00,176.46 L436.33,176.31 L436.67,176.35 L437.00,176.60 L437.33,176.97 L437.67,177.31 L438.00,177.48 L438.33,177.40 L438.67,177.08 L439.00,176.64 L439.33,176.27 L439.67,176.13 L440.00,176.31 L440.33,176.75 L440.67,177.29 L441.00,177.70 L441.33,177.78 L441.67,177.50 L442.00,176.94 L442.33,176.34 L442.67,175.96 L443.00,175.96 L443.33,176.35 L443.67,176.97 L444.00,177.55 L444.33,177.85 L444.67,177.74 L445.00,177.27 L445.33,176.64 L445.67,176.12 L446.00,175.91 L446.33,176.09 L446.67,176.55 L447.00,177.08 L447.33,177.47 L447.67,177.55 L448.00,177.32 L448.33,176.87 L448.67,176.42 L449.00,176.12 L449.33,176.09 L449.67,176.30 L450.00,176.65 L450.33,176.98 L450.67,177.16 L451.00,177.12 L451.33,176.89 L451.67,176.55 L452.00,176.24 L452.33,176.07 L452.67,176.09 L453.00,176.31 L453.33,176.62 L453.67,176.90 L454.00,177.02 L454.33,176.92 L454.67,176.62 L455.00,176.21 L455.33,175.86 L455.67,175.72 L456.00,175.85 L456.33,176.23 L456.67,176.69 L457.00,177.04 L457.33,177.11 L457.67,176.84 L458.00,176.32 L458.33,175.74 L458.67,175.36 L459.00,175.34 L459.33,175.70 L459.67,176.29 L460.00,176.87 L460.33,177.17 L460.67,177.07 L461.00,176.59" stroke="#555" stroke-width="0.6" fill="none" stroke-linejoin="round"/><path d="M466.00,176.75 L466.33,176.60 L466.67,176.37 L467.00,176.14 L467.33,176.03 L467.67,176.08 L468.00,176.29 L468.33,176.61 L468.67,176.89 L469.00,177.04 L469.33,176.98 L469.67,176.72 L470.00,176.37 L470.33,176.08 L470.67,175.99 L471.00,176.16 L471.33,176.54 L471.67,177.00 L472.00,177.34 L472.33,177.41 L472.67,177.19 L473.00,176.74 L473.33,176.28 L473.67,175.99 L474.00,176.02 L474.33,176.36 L474.67,176.87 L475.00,177.35 L475.33,177.59 L475.67,177.51 L476.00,177.15 L476.33,176.67 L476.67,176.28 L477.00,176.14 L477.33,176.30 L477.67,176.68 L478.00,177.11" stroke="#666" stroke-width="0.55" fill="none" stroke-linejoin="round"/><path d="M428.00,189.93 L428.33,190.25 L428.67,190.76 L429.00,191.25 L429.33,191.51 L429.67,191.40 L430.00,190.95 L430.33,190.34 L430.67,189.82 L431.00,189.62 L431.33,189.82 L431.67,190.36 L432.00,191.00 L432.33,191.47 L432.67,191.58 L433.00,191.28 L433.33,190.71 L433.67,190.12 L434.00,189.75 L434.33,189.75 L434.67,190.10 L435.00,190.65 L435.33,191.16 L435.67,191.42 L436.00,191.36 L436.33,191.02 L436.67,190.57 L437.00,190.20 L437.33,190.06 L437.67,190.18 L438.00,190.51 L438.33,190.89 L438.67,191.19 L439.00,191.30 L439.33,191.18 L439.67,190.91 L440.00,190.60 L440.33,190.38 L440.67,190.34 L441.00,190.50 L441.33,190.81 L441.67,191.16 L442.00,191.41 L442.33,191.46 L442.67,191.28 L443.00,190.94 L443.33,190.58 L443.67,190.35 L444.00,190.37 L444.33,190.68 L444.67,191.15 L445.00,191.62 L445.33,191.88 L445.67,191.81 L446.00,191.42 L446.33,190.88 L446.67,190.40 L447.00,190.22 L447.33,190.42 L447.67,190.96 L448.00,191.60 L448.33,192.09 L448.67,192.22 L449.00,191.94 L449.33,191.37 L449.67,190.76 L450.00,190.37 L450.33,190.37 L450.67,190.75 L451.00,191.34 L451.33,191.89 L451.67,192.19 L452.00,192.13 L452.33,191.75 L452.67,191.24 L453.00,190.82 L453.33,190.65 L453.67,190.78 L454.00,191.14 L454.33,191.57 L454.67,191.89 L455.00,191.99 L455.33,191.84 L455.67,191.53 L456.00,191.19 L456.33,190.95 L456.67,190.90 L457.00,191.05 L457.33,191.34 L457.67,191.65 L458.00,191.86 L458.33,191.88 L458.67,191.69 L459.00,191.36 L459.33,191.01 L459.67,190.79 L460.00,190.79 L460.33,191.03 L460.67,191.43 L461.00,191.82" stroke="#555" stroke-width="0.6" fill="none" stroke-linejoin="round"/><path d="M466.00,191.06 L466.33,191.08 L466.67,190.93 L467.00,190.68 L467.33,190.44 L467.67,190.30 L468.00,190.32 L468.33,190.49 L468.67,190.76 L469.00,191.01 L469.33,191.16 L469.67,191.14 L470.00,190.96 L470.33,190.69 L470.67,190.44 L471.00,190.32 L471.33,190.41 L471.67,190.69 L472.00,191.06 L472.33,191.39 L472.67,191.52 L473.00,191.39 L473.33,191.05 L473.67,190.63 L474.00,190.33 L474.33,190.27 L474.67,190.52 L475.00,190.99 L475.33,191.48 L475.67,191.81 L476.00,191.82 L476.33,191.52 L476.67,191.04 L477.00,190.58 L477.33,190.36 L477.67,190.46 L478.00,190.84" stroke="#666" stroke-width="0.55" fill="none" stroke-linejoin="round"/><path d="M428.00,207.41 L428.33,207.17 L428.67,207.11 L429.00,207.27 L429.33,207.58 L429.67,207.92 L430.00,208.14 L430.33,208.13 L430.67,207.86 L431.00,207.42 L431.33,206.98 L431.67,206.72 L432.00,206.77 L432.33,207.11 L432.67,207.62 L433.00,208.08 L433.33,208.28 L433.67,208.10 L434.00,207.61 L434.33,206.98 L434.67,206.48 L435.00,206.32 L435.33,206.58 L435.67,207.13 L436.00,207.75 L436.33,208.16 L436.67,208.19 L437.00,207.83 L437.33,207.22 L437.67,206.63 L438.00,206.29 L438.33,206.34 L438.67,206.72 L439.00,207.26 L439.33,207.72 L439.67,207.93 L440.00,207.80 L440.33,207.42 L440.67,206.95 L441.00,206.59 L441.33,206.47 L441.67,206.61 L442.00,206.94 L442.33,207.31 L442.67,207.57 L443.00,207.63 L443.33,207.47 L443.67,207.17 L444.00,206.86 L444.33,206.65 L444.67,206.62 L445.00,206.80 L445.33,207.11 L445.67,207.44 L446.00,207.65 L446.33,207.66 L446.67,207.44 L447.00,207.08 L447.33,206.71 L447.67,206.51 L448.00,206.57 L448.33,206.90 L448.67,207.38 L449.00,207.83 L449.33,208.04 L449.67,207.91 L450.00,207.48 L450.33,206.93 L450.67,206.48 L451.00,206.36 L451.33,206.62 L451.67,207.18 L452.00,207.82 L452.33,208.27 L452.67,208.34 L453.00,208.00 L453.33,207.42 L453.67,206.83 L454.00,206.49 L454.33,206.56 L454.67,206.99 L455.00,207.60 L455.33,208.14 L455.67,208.39 L456.00,208.28 L456.33,207.88 L456.67,207.38 L457.00,206.99 L457.33,206.88 L457.67,207.06 L458.00,207.46 L458.33,207.90 L458.67,208.20 L459.00,208.27 L459.33,208.11 L459.67,207.80 L460.00,207.47 L460.33,207.27 L460.67,207.27 L461.00,207.46" stroke="#555" stroke-width="0.6" fill="none" stroke-linejoin="round"/><path d="M466.00,207.36 L466.33,207.17 L466.67,207.28 L467.00,207.65 L467.33,208.14 L467.67,208.52 L468.00,208.65 L468.33,208.44 L468.67,207.98 L469.00,207.47 L469.33,207.10 L469.67,207.04 L470.00,207.30 L470.33,207.76 L470.67,208.21 L471.00,208.47 L471.33,208.43 L471.67,208.12 L472.00,207.67 L472.33,207.27 L472.67,207.07 L473.00,207.14 L473.33,207.42 L473.67,207.77 L474.00,208.04 L474.33,208.13 L474.67,208.00 L475.00,207.73 L475.33,207.41 L475.67,207.18 L476.00,207.11 L476.33,207.21 L476.67,207.43 L477.00,207.67 L477.33,207.83 L477.67,207.84 L478.00,207.69" stroke="#666" stroke-width="0.55" fill="none" stroke-linejoin="round"/><path d="M428.00,224.35 L428.33,223.99 L428.67,223.62 L429.00,223.38 L429.33,223.37 L429.67,223.57 L430.00,223.89 L430.33,224.20 L430.67,224.37 L431.00,224.35 L431.33,224.14 L431.67,223.82 L432.00,223.51 L432.33,223.34 L432.67,223.38 L433.00,223.62 L433.33,223.98 L433.67,224.31 L434.00,224.46 L434.33,224.35 L434.67,223.99 L435.00,223.52 L435.33,223.12 L435.67,222.97 L436.00,223.16 L436.33,223.61 L436.67,224.15 L437.00,224.54 L437.33,224.59 L437.67,224.27 L438.00,223.68 L438.33,223.06 L438.67,222.68 L439.00,222.68 L439.33,223.08 L439.67,223.69 L440.00,224.25 L440.33,224.52 L440.67,224.38 L441.00,223.89 L441.33,223.26 L441.67,222.75 L442.00,222.56 L442.33,222.74 L442.67,223.19 L443.00,223.70 L443.33,224.06 L443.67,224.12 L444.00,223.87 L444.33,223.44 L444.67,223.00 L445.00,222.73 L445.33,222.70 L445.67,222.92 L446.00,223.26 L446.33,223.57 L446.67,223.74 L447.00,223.70 L447.33,223.47 L447.67,223.14 L448.00,222.84 L448.33,222.68 L448.67,222.72 L449.00,222.95 L449.33,223.28 L449.67,223.57 L450.00,223.70 L450.33,223.60 L450.67,223.29 L451.00,222.88 L451.33,222.54 L451.67,222.41 L452.00,222.58 L452.33,222.99 L452.67,223.49 L453.00,223.86 L453.33,223.93 L453.67,223.65 L454.00,223.12 L454.33,222.55 L454.67,222.19 L455.00,222.21 L455.33,222.61 L455.67,223.23 L456.00,223.82 L456.33,224.12 L456.67,224.01 L457.00,223.54 L457.33,222.92 L457.67,222.40 L458.00,222.22 L458.33,222.43 L458.67,222.94 L459.00,223.53 L459.33,223.96 L459.67,224.07 L460.00,223.83 L460.33,223.37 L460.67,222.91 L461.00,222.63" stroke="#555" stroke-width="0.6" fill="none" stroke-linejoin="round"/><path d="M466.00,223.70 L466.33,223.38 L466.67,223.25 L467.00,223.38 L467.33,223.74 L467.67,224.19 L468.00,224.54 L468.33,224.63 L468.67,224.42 L469.00,223.97 L469.33,223.48 L469.67,223.16 L470.00,223.13 L470.33,223.43 L470.67,223.92 L471.00,224.39 L471.33,224.65 L471.67,224.58 L472.00,224.23 L472.33,223.74 L472.67,223.32 L473.00,223.13 L473.33,223.25 L473.67,223.59 L474.00,224.01 L474.33,224.32 L474.67,224.39 L475.00,224.23 L475.33,223.89 L475.67,223.54 L476.00,223.30 L476.33,223.25 L476.67,223.40 L477.00,223.66 L477.33,223.92 L477.67,224.06 L478.00,224.05" stroke="#666" stroke-width="0.55" fill="none" stroke-linejoin="round"/><path d="M428.00,238.19 L428.33,238.68 L428.67,238.81 L429.00,238.54 L429.33,237.99 L429.67,237.41 L430.00,237.05 L430.33,237.06 L430.67,237.41 L431.00,237.95 L431.33,238.46 L431.67,238.74 L432.00,238.69 L432.33,238.38 L432.67,237.95 L433.00,237.59 L433.33,237.45 L433.67,237.57 L434.00,237.88 L434.33,238.27 L434.67,238.57 L435.00,238.68 L435.33,238.58 L435.67,238.32 L436.00,238.01 L436.33,237.78 L436.67,237.73 L437.00,237.88 L437.33,238.19 L437.67,238.54 L438.00,238.79 L438.33,238.85 L438.67,238.67 L439.00,238.32 L439.33,237.93 L439.67,237.68 L440.00,237.69 L440.33,237.99 L440.67,238.46 L441.00,238.94 L441.33,239.20 L441.67,239.12 L442.00,238.72 L442.33,238.15 L442.67,237.65 L443.00,237.44 L443.33,237.63 L443.67,238.15 L444.00,238.78 L444.33,239.26 L444.67,239.39 L445.00,239.10 L445.33,238.52 L445.67,237.90 L446.00,237.49 L446.33,237.46 L446.67,237.81 L447.00,238.37 L447.33,238.91 L447.67,239.19 L448.00,239.12 L448.33,238.74 L448.67,238.23 L449.00,237.79 L449.33,237.60 L449.67,237.71 L450.00,238.04 L450.33,238.44 L450.67,238.74 L451.00,238.82 L451.33,238.67 L451.67,238.36 L452.00,238.00 L452.33,237.74 L452.67,237.67 L453.00,237.80 L453.33,238.08 L453.67,238.38 L454.00,238.58 L454.33,238.60 L454.67,238.40 L455.00,238.06 L455.33,237.69 L455.67,237.45 L456.00,237.43 L456.33,237.66 L456.67,238.06 L457.00,238.46 L457.33,238.67 L457.67,238.59 L458.00,238.21 L458.33,237.67 L458.67,237.19 L459.00,236.97 L459.33,237.12 L459.67,237.58 L460.00,238.17 L460.33,238.63 L460.67,238.75 L461.00,238.46" stroke="#555" stroke-width="0.6" fill="none" stroke-linejoin="round"/><path d="M466.00,237.84 L466.33,238.11 L466.67,238.16 L467.00,237.99 L467.33,237.68 L467.67,237.37 L468.00,237.17 L468.33,237.17 L468.67,237.33 L469.00,237.59 L469.33,237.85 L469.67,237.99 L470.00,237.98 L470.33,237.82 L470.67,237.57 L471.00,237.34 L471.33,237.22 L471.67,237.26 L472.00,237.47 L472.33,237.76 L472.67,238.03 L473.00,238.17 L473.33,238.10 L473.67,237.84 L474.00,237.50 L474.33,237.21 L474.67,237.12 L475.00,237.28 L475.33,237.65 L475.67,238.10 L476.00,238.43 L476.33,238.50 L476.67,238.28 L477.00,237.84 L477.33,237.38 L477.67,237.10 L478.00,237.14" stroke="#666" stroke-width="0.55" fill="none" stroke-linejoin="round"/><path d="M428.00,181.09 C444.67,182.01 461.33,181.30 478.00,181.24" stroke="#606060" stroke-width="0.6" fill="none" /><path d="M428.00,186.62 C444.67,186.37 461.33,185.94 478.00,186.91" stroke="#606060" stroke-width="0.6" fill="none" /><path d="M428.00,196.28 C444.67,195.28 461.33,196.21 478.00,196.04" stroke="#606060" stroke-width="0.6" fill="none" /><path d="M428.00,202.03 C444.67,202.14 461.33,200.91 478.00,202.17" stroke="#606060" stroke-width="0.6" fill="none" /><path d="M428.00,211.47 C444.67,211.77 461.33,212.72 478.00,211.51" stroke="#606060" stroke-width="0.6" fill="none" /><path d="M428.00,215.98 C444.67,214.71 461.33,216.47 478.00,216.37" stroke="#606060" stroke-width="0.6" fill="none" /><path d="M428.00,228.10 C444.67,229.05 461.33,227.48 478.00,228.27" stroke="#606060" stroke-width="0.6" fill="none" /><path d="M428.00,232.63 C444.67,232.72 461.33,232.38 478.00,232.98" stroke="#606060" stroke-width="0.6" fill="none" /><path d="M428.00,243.62 C444.67,242.93 461.33,243.46 478.00,242.38" stroke="#606060" stroke-width="0.6" fill="none" /><path d="M428.00,248.28 C444.67,248.41 461.33,249.38 478.00,248.45" stroke="#606060" stroke-width="0.6" fill="none" /><rect x="461.50" y="248.60" width="24.20" height="9.40" rx="0" stroke="#888" stroke-width="0.6" fill="none"/><text x="473.60" y="254.50" font-size="3.4" text-anchor="middle" font-weight="bold" fill="#111" font-family="Liberation Sans">Nyheder</text><ellipse cx="353.8" cy="158.9" rx="13" ry="4.4" stroke="#e8281e" stroke-width="1.1" fill="none"/><text x="289.7" y="189.6" font-size="7.4" textLength="47" lengthAdjust="spacingAndGlyphs" font-weight="bold" fill="#111" font-family="Liberation Sans">HOVER - KLIK</text><text x="334.2" y="262.9" font-size="7.6" textLength="14.8" lengthAdjust="spacingAndGlyphs" font-weight="bold" fill="#111" font-family="Liberation Sans">KLIK</text><rect x="407.50" y="316.60" width="241.70" height="160.20" rx="0" stroke="#4a4a4a" stroke-width="1.1" fill="none"/><path d="M410.50,320.60 L435.90,319.90 L435.50,336.20 L410.80,336.80 Z" stroke="#888" stroke-width="0.6" fill="none" /><path d="M415.50,324.10 L430.50,333.10 M430.50,324.10 L415.50,333.10" stroke="#777" stroke-width="0.6" fill="none" /><rect x="437.20" y="325.30" width="23.00" height="8.90" rx="0" stroke="#8c8c8c" stroke-width="0.7" fill="none"/><text x="448.70" y="330.80" font-size="3.4" text-anchor="middle" font-weight="bold" fill="#111" font-family="Liberation Sans">FORSIDE</text><rect x="464.10" y="325.30" width="23.90" height="16.80" rx="0" stroke="#8c8c8c" stroke-width="0.7" fill="none"/><text x="476.00" y="330.80" font-size="3.4" text-anchor="middle" font-weight="bold" fill="#111" font-family="Liberation Sans">CE Markering</text><text x="476.00" y="335.20" font-size="3.4" text-anchor="middle" font-weight="bold" fill="#111" font-family="Liberation Sans">Generelt</text><text x="476.00" y="339.90" font-size="3.4" text-anchor="middle" font-weight="bold" fill="#111" font-family="Liberation Sans">Direktivlisten</text><rect x="491.50" y="325.30" width="24.20" height="22.00" rx="0" stroke="#8c8c8c" stroke-width="0.7" fill="none"/><text x="503.60" y="330.80" font-size="3.4" text-anchor="middle" font-weight="bold" fill="#111" font-family="Liberation Sans">Information</text><text x="503.60" y="335.20" font-size="3.4" text-anchor="middle" font-weight="bold" fill="#111" font-family="Liberation Sans">Eksport</text><text x="503.60" y="339.60" font-size="3.4" text-anchor="middle" font-weight="bold" fill="#111" font-family="Liberation Sans">Import</text><text x="503.60" y="344.00" font-size="3.4" text-anchor="middle" font-weight="bold" fill="#111" font-family="Liberation Sans">Langtidsopb.</text><rect x="518.70" y="325.30" width="22.50" height="8.60" rx="0" stroke="#8c8c8c" stroke-width="0.7" fill="none"/><text x="530.00" y="330.80" font-size="3.4" text-anchor="middle" font-weight="bold" fill="#111" font-family="Liberation Sans">Nyheder</text><rect x="547.20" y="325.20" width="21.80" height="16.40" rx="0" stroke="#8c8c8c" stroke-width="0.7" fill="none"/><text x="558.10" y="330.80" font-size="3.4" text-anchor="middle" font-weight="bold" fill="#111" font-family="Liberation Sans">Shop</text><text x="558.10" y="335.20" font-size="3.4" text-anchor="middle" font-weight="bold" fill="#111" font-family="Liberation Sans">Håndbøger</text><text x="558.10" y="339.60" font-size="3.4" text-anchor="middle" font-weight="bold" fill="#111" font-family="Liberation Sans">Forsiding</text><rect x="572.90" y="325.20" width="24.30" height="9.20" rx="0" stroke="#8c8c8c" stroke-width="0.7" fill="none"/><text x="585.00" y="330.80" font-size="3.4" text-anchor="middle" font-weight="bold" fill="#111" font-family="Liberation Sans">Kontakt</text><path d="M599.00,325.80 L603.00,325.40 L613.00,324.60 L613.00,332.40 L599.30,333.10 Z" stroke="#5a5a5a" stroke-width="0.6" fill="none" /><circle cx="601.70" cy="327.40" r="1.1" stroke="#5a5a5a" stroke-width="0.5" fill="none"/><path d="M599.80,332.10 Q601.70,328.10 603.80,332.10 M604.50,326.60 L612.00,326.10 M604.50,328.90 L612.00,328.40 M604.70,331.10 L612.00,330.60 M604.10,325.40 L604.10,332.60" stroke="#5a5a5a" stroke-width="0.5" fill="none" /><path d="M615.30,326.80 L629.00,326.80 L627.30,332.40 L617.00,332.40 Z M616.50,328.80 L628.00,328.80 M620.00,327.10 L620.00,332.10 M624.00,327.10 L624.00,332.10 M620.50,326.60 L624.00,322.90" stroke="#5a5a5a" stroke-width="0.6" fill="none" /><ellipse cx="639.00" cy="326.40" rx="3.8" ry="2.8" stroke="#5a5a5a" stroke-width="0.7" fill="none"/><path d="M636.70,328.60 L633.30,332.80" stroke="#5a5a5a" stroke-width="1.3" fill="none" stroke-linecap="round"/><path d="M407.50,464.20 H649.20" stroke="#aaa" stroke-width="0.8" fill="none" /><path d="M440.50,471.71 L440.83,471.33 L441.17,470.66 L441.50,469.97 L441.83,469.55 L442.17,469.56 L442.50,469.98 L442.83,470.62 L443.17,471.20 L443.50,471.47 L443.83,471.33 L444.17,470.86 L444.50,470.26 L444.83,469.77 L445.17,469.59 L445.50,469.75 L445.83,470.15 L446.17,470.61 L446.50,470.93 L446.83,470.99 L447.17,470.78 L447.50,470.40 L447.83,470.00 L448.17,469.73 L448.50,469.69 L448.83,469.87 L449.17,470.19 L449.50,470.51 L449.83,470.71 L450.17,470.69 L450.50,470.46 L450.83,470.09 L451.17,469.72 L451.50,469.50 L451.83,469.52 L452.17,469.80 L452.50,470.23 L452.83,470.64 L453.17,470.83 L453.50,470.71 L453.83,470.30 L454.17,469.74 L454.50,469.26 L454.83,469.09 L455.17,469.30 L455.50,469.84 L455.83,470.48 L456.17,470.95 L456.50,471.04 L456.83,470.70 L457.17,470.05 L457.50,469.37 L457.83,468.95 L458.17,468.97 L458.50,469.41 L458.83,470.10 L459.17,470.73 L459.50,471.05" stroke="#505050" stroke-width="0.6" fill="none" stroke-linejoin="round"/><path d="M468.20,471.07 L468.53,470.64 L468.87,470.15 L469.20,469.81 L469.53,469.80 L469.87,470.14 L470.20,470.73 L470.53,471.32 L470.87,471.67 L471.20,471.62 L471.53,471.17 L471.87,470.51 L472.20,469.92 L472.53,469.65 L472.87,469.84 L473.20,470.41 L473.53,471.12 L473.87,471.68 L474.20,471.86 L474.53,471.58 L474.87,470.99 L475.20,470.34 L475.53,469.90 L475.87,469.84 L476.20,470.18 L476.53,470.74 L476.87,471.29 L477.20,471.60 L477.53,471.57 L477.87,471.23 L478.20,470.74 L478.53,470.32 L478.87,470.11 L479.20,470.19 L479.53,470.50 L479.87,470.89 L480.20,471.20 L480.53,471.33 L480.87,471.21 L481.20,470.91 L481.53,470.55 L481.87,470.26 L482.20,470.15 L482.53,470.27 L482.87,470.57 L483.20,470.93 L483.53,471.20 L483.87,471.26 L484.20,471.06 L484.53,470.66 L484.87,470.20 L485.20,469.87 L485.53,469.82 L485.87,470.10 L486.20,470.59 L486.53,471.10 L486.87,471.40 L487.20,471.34 L487.53,470.90 L487.87,470.25 L488.20,469.66" stroke="#505050" stroke-width="0.6" fill="none" stroke-linejoin="round"/><path d="M498.50,469.60 L498.84,469.48 L499.18,469.75 L499.51,470.32 L499.85,470.96 L500.19,471.40 L500.53,471.44 L500.87,471.06 L501.21,470.40 L501.55,469.77 L501.88,469.45 L502.22,469.59 L502.56,470.14 L502.90,470.87 L503.24,471.47 L503.57,471.68 L503.91,471.44 L504.25,470.86 L504.59,470.21 L504.93,469.78 L505.27,469.74 L505.60,470.10 L505.94,470.67 L506.28,471.22 L506.62,471.51 L506.96,471.46 L507.30,471.12 L507.63,470.65 L507.97,470.26 L508.31,470.11 L508.65,470.24 L508.99,470.58 L509.33,470.97 L509.66,471.27 L510.00,471.35 L510.34,471.20 L510.68,470.89 L511.02,470.53 L511.36,470.29 L511.69,470.26 L512.03,470.45 L512.37,470.81 L512.71,471.18 L513.05,471.41 L513.39,471.39 L513.72,471.09 L514.06,470.63 L514.40,470.19 L514.74,469.97 L515.08,470.09 L515.42,470.51 L515.75,471.07 L516.09,471.53 L516.43,471.67 L516.77,471.39 L517.11,470.80 L517.45,470.13 L517.78,469.68 L518.12,469.64 L518.46,470.04 L518.80,470.71" stroke="#505050" stroke-width="0.6" fill="none" stroke-linejoin="round"/><path d="M530.90,470.57 L531.24,471.21 L531.57,471.52 L531.91,471.36 L532.25,470.84 L532.59,470.20 L532.92,469.71 L533.26,469.59 L533.60,469.87 L533.93,470.41 L534.27,470.98 L534.61,471.34 L534.95,471.38 L535.28,471.10 L535.62,470.66 L535.96,470.24 L536.29,470.04 L536.63,470.10 L536.97,470.40 L537.30,470.80 L537.64,471.14 L537.98,471.29 L538.32,471.21 L538.65,470.93 L538.99,470.58 L539.33,470.30 L539.66,470.21 L540.00,470.35 L540.34,470.68 L540.68,471.07 L541.01,471.37 L541.35,471.44 L541.69,471.23 L542.02,470.80 L542.36,470.34 L542.70,470.03 L543.04,470.04 L543.37,470.39 L543.71,470.94 L544.05,471.47 L544.38,471.74 L544.72,471.61 L545.06,471.11 L545.40,470.44 L545.73,469.88 L546.07,469.69 L546.41,469.95 L546.74,470.56 L547.08,471.26 L547.42,471.73 L547.75,471.78 L548.09,471.37 L548.43,470.69 L548.77,470.03 L549.10,469.66 L549.44,469.72 L549.78,470.17 L550.11,470.79 L550.45,471.30 L550.79,471.49 L551.13,471.30 L551.46,470.83 L551.80,470.28" stroke="#505050" stroke-width="0.6" fill="none" stroke-linejoin="round"/><path d="M561.20,470.77 L561.54,470.28 L561.87,469.95 L562.21,469.92 L562.55,470.18 L562.89,470.60 L563.22,471.01 L563.56,471.25 L563.90,471.24 L564.24,471.01 L564.57,470.66 L564.91,470.34 L565.25,470.19 L565.59,470.26 L565.92,470.54 L566.26,470.91 L566.60,471.23 L566.93,471.37 L567.27,471.26 L567.61,470.93 L567.95,470.50 L568.28,470.17 L568.62,470.08 L568.96,470.29 L569.30,470.76 L569.63,471.28 L569.97,471.63 L570.31,471.64 L570.65,471.28 L570.98,470.68 L571.32,470.09 L571.66,469.78 L571.99,469.89 L572.33,470.39 L572.67,471.08 L573.01,471.65 L573.34,471.85 L573.68,471.59 L574.02,470.96 L574.36,470.25 L574.69,469.74 L575.03,469.66 L575.37,470.02 L575.71,470.65 L576.04,471.27 L576.38,471.60 L576.72,471.53 L577.05,471.10 L577.39,470.50 L577.73,469.99 L578.07,469.77 L578.40,469.90 L578.74,470.29 L579.08,470.76 L579.42,471.09 L579.75,471.17 L580.09,470.97 L580.43,470.59 L580.77,470.19 L581.10,469.92 L581.44,469.87 L581.78,470.06 L582.11,470.38 L582.45,470.70 L582.79,470.89 L583.13,470.85 L583.46,470.60 L583.80,470.21 L584.14,469.84 L584.48,469.63 L584.81,469.69 L585.15,470.00 L585.49,470.45 L585.83,470.83 L586.16,470.97 L586.50,470.78" stroke="#505050" stroke-width="0.6" fill="none" stroke-linejoin="round"/><path d="M595.20,471.40 L595.53,471.51 L595.87,471.18 L596.20,470.53 L596.53,469.82 L596.87,469.36 L597.20,469.32 L597.53,469.69 L597.87,470.31 L598.20,470.90 L598.53,471.21 L598.87,471.12 L599.20,470.69 L599.53,470.10 L599.87,469.61 L600.20,469.40 L600.53,469.52 L600.87,469.89 L601.20,470.34 L601.53,470.68 L601.87,470.77 L602.20,470.61 L602.53,470.25 L602.87,469.86 L603.20,469.58 L603.53,469.52 L603.87,469.67 L604.20,469.98 L604.53,470.32 L604.87,470.55 L605.20,470.58 L605.53,470.37 L605.87,470.01 L606.20,469.63 L606.53,469.39 L606.87,469.39 L607.20,469.66 L607.53,470.10 L607.87,470.54 L608.20,470.79 L608.53,470.72 L608.87,470.33 L609.20,469.76 L609.53,469.27 L609.87,469.05 L610.20,469.24 L610.53,469.77 L610.87,470.43 L611.20,470.95 L611.53,471.10 L611.87,470.81 L612.20,470.19 L612.53,469.51 L612.87,469.05 L613.20,469.03 L613.53,469.44 L613.87,470.12 L614.20,470.77 L614.53,471.14 L614.87,471.08 L615.20,470.65 L615.53,470.04 L615.87,469.52 L616.20,469.31" stroke="#505050" stroke-width="0.6" fill="none" stroke-linejoin="round"/><text x="412.00" y="346.40" font-size="3.0" text-anchor="start" font-weight="bold" fill="#111" font-family="Liberation Sans" textLength="57" lengthAdjust="spacingAndGlyphs">forside / ce markering / direktivlisten</text><rect x="473.20" y="346.30" width="109.40" height="20.20" rx="0" stroke="#8c8c8c" stroke-width="0.7" fill="none"/><path d="M480.00,358.91 L480.33,359.50 L480.67,359.76 L481.00,359.68 L481.33,359.31 L481.67,358.69 L482.00,357.93 L482.33,357.12 L482.67,356.36 L483.00,355.72 L483.33,355.27 L483.67,355.03 L484.00,355.02 L484.33,355.22 L484.67,355.58 L485.00,356.08 L485.33,356.64 L485.67,357.22 L486.00,357.77 L486.33,358.24 L486.67,358.59 L487.00,358.79 L487.33,358.82 L487.67,358.66 L488.00,358.31 L488.33,357.81 L488.67,357.19 L489.00,356.50 L489.33,355.82 L489.67,355.23 L490.00,354.80 L490.33,354.60 L490.67,354.67 L491.00,355.04 L491.33,355.67 L491.67,356.52 L492.00,357.49 L492.33,358.47 L492.67,359.35 L493.00,359.99 L493.33,360.33 L493.67,360.30 L494.00,359.89 L494.33,359.16 L494.67,358.17 L495.00,357.05 L495.33,355.94 L495.67,354.95 L496.00,354.22 L496.33,353.81 L496.67,353.77 L497.00,354.08 L497.33,354.69 L497.67,355.51 L498.00,356.43 L498.33,357.34 L498.67,358.13 L499.00,358.73 L499.33,359.07 L499.67,359.14 L500.00,358.95 L500.33,358.55 L500.67,357.99 L501.00,357.35 L501.33,356.69 L501.67,356.07 L502.00,355.56 L502.33,355.19 L502.67,354.98 L503.00,354.95 L503.33,355.09 L503.67,355.38 L504.00,355.82 L504.33,356.34 L504.67,356.92 L505.00,357.50 L505.33,358.01 L505.67,358.40 L506.00,358.61 L506.33,358.59 L506.67,358.33 L507.00,357.83 L507.33,357.13 L507.67,356.28 L508.00,355.39 L508.33,354.54 L508.67,353.86 L509.00,353.42 L509.33,353.31 L509.67,353.54 L510.00,354.12 L510.33,354.98 L510.67,356.02 L511.00,357.12 L511.33,358.15 L511.67,358.98 L512.00,359.52 L512.33,359.69 L512.67,359.47 L513.00,358.91 L513.33,358.08 L513.67,357.07 L514.00,356.03 L514.33,355.07 L514.67,354.29 L515.00,353.79 L515.33,353.60 L515.67,353.71 L516.00,354.10 L516.33,354.70 L516.67,355.43 L517.00,356.19 L517.33,356.91 L517.67,357.51 L518.00,357.94 L518.33,358.17 L518.67,358.21 L519.00,358.05 L519.33,357.74 L519.67,357.30 L520.00,356.78 L520.33,356.23 L520.67,355.70 L521.00,355.23 L521.33,354.88 L521.67,354.68 L522.00,354.66 L522.33,354.85 L522.67,355.23 L523.00,355.80 L523.33,356.50 L523.67,357.27 L524.00,358.03 L524.33,358.69 L524.67,359.16 L525.00,359.37 L525.33,359.27 L525.67,358.87 L526.00,358.17 L526.33,357.27 L526.67,356.25 L527.00,355.24 L527.33,354.36 L527.67,353.74 L528.00,353.44 L528.33,353.53 L528.67,353.99 L529.00,354.77 L529.33,355.78 L529.67,356.90 L530.00,357.99 L530.33,358.93 L530.67,359.61 L531.00,359.96 L531.33,359.97 L531.67,359.64 L532.00,359.04 L532.33,358.25 L532.67,357.39 L533.00,356.55 L533.33,355.82 L533.67,355.29 L534.00,354.99 L534.33,354.93 L534.67,355.10 L535.00,355.46 L535.33,355.96 L535.67,356.55 L536.00,357.15 L536.33,357.72 L536.67,358.20 L537.00,358.56 L537.33,358.76 L537.67,358.80 L538.00,358.66 L538.33,358.35 L538.67,357.88 L539.00,357.31 L539.33,356.67 L539.67,356.02 L540.00,355.44 L540.33,355.00 L540.67,354.76 L541.00,354.77 L541.33,355.05 L541.67,355.59 L542.00,356.34 L542.33,357.24 L542.67,358.18 L543.00,359.05 L543.33,359.73 L543.67,360.13 L544.00,360.19 L544.33,359.88 L544.67,359.23 L545.00,358.30 L545.33,357.20 L545.67,356.07 L546.00,355.03 L546.33,354.21 L546.67,353.70 L547.00,353.56 L547.33,353.79 L547.67,354.35 L548.00,355.16 L548.33,356.11 L548.67,357.08 L549.00,357.96 L549.33,358.64 L549.67,359.07 L550.00,359.21 L550.33,359.06 L550.67,358.68 L551.00,358.10 L551.33,357.42 L551.67,356.72 L552.00,356.05 L552.33,355.49 L552.67,355.08 L553.00,354.85 L553.33,354.80 L553.67,354.93 L554.00,355.22 L554.33,355.64 L554.67,356.15 L555.00,356.70 L555.33,357.26 L555.67,357.75 L556.00,358.14 L556.33,358.36 L556.67,358.39 L557.00,358.19 L557.33,357.77 L557.67,357.15 L558.00,356.39 L558.33,355.56 L558.67,354.74 L559.00,354.06 L559.33,353.58 L559.67,353.40 L560.00,353.55 L560.33,354.03 L560.67,354.80 L561.00,355.78 L561.33,356.86 L561.67,357.91 L562.00,358.80 L562.33,359.42 L562.67,359.69 L563.00,359.58 L563.33,359.10 L563.67,358.31 L564.00,357.32 L564.33,356.25 L564.67,355.22 L565.00,354.36 L565.33,353.77 L565.67,353.49 L566.00,353.54 L566.33,353.89 L566.67,354.49 L567.00,355.25 L567.33,356.07 L567.67,356.86 L568.00,357.54 L568.33,358.04 L568.67,358.33 L569.00,358.40 L569.33,358.26 L569.67,357.95 L570.00,357.50 L570.33,356.98 L570.67,356.42 L571.00,355.89 L571.33,355.43 L571.67,355.07 L572.00,354.87 L572.33,354.83 L572.67,354.99 L573.00,355.33 L573.33,355.83 L573.67,356.47 L574.00,357.18 L574.33,357.90 L574.67,358.54 L575.00,359.03" stroke="#666" stroke-width="0.6" fill="none" stroke-linejoin="round"/><rect x="472.40" y="368.60" width="111.10" height="69.40" rx="0" stroke="#8c8c8c" stroke-width="0.7" fill="none"/><path d="M480.00,375.90 L480.33,376.54 L480.67,376.81 L481.00,376.66 L481.33,376.16 L481.67,375.48 L482.00,374.84 L482.33,374.42 L482.67,374.35 L483.00,374.62 L483.33,375.13 L483.67,375.71 L484.00,376.21 L484.33,376.49 L484.67,376.49 L485.00,376.24 L485.33,375.83 L485.67,375.40 L486.00,375.06 L486.33,374.92 L486.67,374.99 L487.00,375.26 L487.33,375.66 L487.67,376.07 L488.00,376.39 L488.33,376.52 L488.67,376.43 L489.00,376.12 L489.33,375.68 L489.67,375.23 L490.00,374.91 L490.33,374.83 L490.67,375.03 L491.00,375.49 L491.33,376.08 L491.67,376.63 L492.00,376.97 L492.33,376.97 L492.67,376.61 L493.00,375.97 L493.33,375.24 L493.67,374.64 L494.00,374.37 L494.33,374.52 L494.67,375.06 L495.00,375.84 L495.33,376.61 L495.67,377.13 L496.00,377.25 L496.33,376.92 L496.67,376.25 L497.00,375.44 L497.33,374.74 L497.67,374.36 L498.00,374.39 L498.33,374.80 L498.67,375.45 L499.00,376.12 L499.33,376.62 L499.67,376.80 L500.00,376.63 L500.33,376.19 L500.67,375.61 L501.00,375.08 L501.33,374.73 L501.67,374.65 L502.00,374.83 L502.33,375.19 L502.67,375.62 L503.00,375.99 L503.33,376.20 L503.67,376.19 L504.00,375.97 L504.33,375.59 L504.67,375.16 L505.00,374.80 L505.33,374.59 L505.67,374.61 L506.00,374.85 L506.33,375.25 L506.67,375.71 L507.00,376.08 L507.33,376.24 L507.67,376.11 L508.00,375.70 L508.33,375.11 L508.67,374.50 L509.00,374.07 L509.33,373.94 L509.67,374.20 L510.00,374.76 L510.33,375.48 L510.67,376.13 L511.00,376.50 L511.33,376.46 L511.67,376.01 L512.00,375.26 L512.33,374.45 L512.67,373.81 L513.00,373.55 L513.33,373.74 L513.67,374.31 L514.00,375.08 L514.33,375.82 L514.67,376.29 L515.00,376.37 L515.33,376.05 L515.67,375.44 L516.00,374.75 L516.33,374.17 L516.67,373.88 L517.00,373.93 L517.33,374.29 L517.67,374.82 L518.00,375.36 L518.33,375.76 L518.67,375.91 L519.00,375.80 L519.33,375.47 L519.67,375.04 L520.00,374.63 L520.33,374.36 L520.67,374.30 L521.00,374.45 L521.33,374.78 L521.67,375.19 L522.00,375.59 L522.33,375.85 L522.67,375.90 L523.00,375.72 L523.33,375.34 L523.67,374.87 L524.00,374.45 L524.33,374.21 L524.67,374.25 L525.00,374.59 L525.33,375.15 L525.67,375.78 L526.00,376.29" stroke="#555" stroke-width="0.65" fill="none" stroke-linejoin="round"/><path d="M540.00,374.48 L540.33,374.68 L540.67,375.04 L541.00,375.44 L541.33,375.77 L541.67,375.96 L542.00,375.96 L542.33,375.79 L542.67,375.50 L543.00,375.19 L543.33,374.95 L543.67,374.84 L544.00,374.90 L544.33,375.13 L544.67,375.48 L545.00,375.85 L545.33,376.14 L545.67,376.27 L546.00,376.18 L546.33,375.89 L546.67,375.47 L547.00,375.06 L547.33,374.77 L547.67,374.72 L548.00,374.95 L548.33,375.42 L548.67,375.99 L549.00,376.50 L549.33,376.78 L549.67,376.75 L550.00,376.40 L550.33,375.82 L550.67,375.20 L551.00,374.73 L551.33,374.56 L551.67,374.74 L552.00,375.23 L552.33,375.88 L552.67,376.48 L553.00,376.86 L553.33,376.92 L553.67,376.63 L554.00,376.12 L554.33,375.54 L554.67,375.06 L555.00,374.83 L555.33,374.90 L555.67,375.21 L556.00,375.68 L556.33,376.13 L556.67,376.46 L557.00,376.56 L557.33,376.43 L557.67,376.13 L558.00,375.75 L558.33,375.40 L558.67,375.17 L559.00,375.13 L559.33,375.26 L559.67,375.52 L560.00,375.83 L560.33,376.11 L560.67,376.28 L561.00,376.28 L561.33,376.10 L561.67,375.78 L562.00,375.41 L562.33,375.08 L562.67,374.89 L563.00,374.92 L563.33,375.15 L563.67,375.55 L564.00,375.99 L564.33,376.33 L564.67,376.46 L565.00,376.30" stroke="#555" stroke-width="0.6" fill="none" stroke-linejoin="round"/><path d="M481.00,381.68 C494.26,381.73 507.52,382.94 520.78,381.47" stroke="#606060" stroke-width="0.65" fill="none" /><path d="M481.00,388.06 C494.90,388.97 508.80,388.80 522.70,388.46" stroke="#606060" stroke-width="0.65" fill="none" /><path d="M481.00,393.89 C494.56,393.64 508.11,394.97 521.67,394.58" stroke="#606060" stroke-width="0.65" fill="none" /><path d="M481.00,399.19 C494.30,398.92 507.60,398.93 520.91,399.58" stroke="#606060" stroke-width="0.65" fill="none" /><path d="M481.00,406.70 C495.18,405.75 509.36,406.80 523.53,406.84" stroke="#606060" stroke-width="0.65" fill="none" /><path d="M481.00,414.27 C495.13,414.18 509.27,413.74 523.40,413.85" stroke="#606060" stroke-width="0.65" fill="none" /><path d="M481.00,417.64 C495.35,419.21 509.70,418.91 524.06,418.67" stroke="#606060" stroke-width="0.65" fill="none" /><path d="M481.00,423.96 C495.60,423.85 510.19,423.10 524.79,424.27" stroke="#606060" stroke-width="0.65" fill="none" /><path d="M481.00,428.55 C494.12,428.37 507.25,428.25 520.37,428.90" stroke="#606060" stroke-width="0.65" fill="none" /><path d="M545.00,381.50 C551.67,380.88 558.33,381.22 565.00,381.55" stroke="#606060" stroke-width="0.65" fill="none" /><path d="M545.00,387.05 C551.67,386.14 558.33,388.04 565.00,387.33" stroke="#606060" stroke-width="0.65" fill="none" /><path d="M545.00,392.01 C551.67,391.85 558.33,392.06 565.00,392.25" stroke="#606060" stroke-width="0.65" fill="none" /><path d="M545.00,396.88 C551.67,398.08 558.33,398.40 565.00,397.26" stroke="#606060" stroke-width="0.65" fill="none" /><path d="M545.00,404.28 C551.67,403.37 558.33,403.41 565.00,404.12" stroke="#606060" stroke-width="0.65" fill="none" /><path d="M545.00,409.44 C551.67,410.44 558.33,408.94 565.00,409.17" stroke="#606060" stroke-width="0.65" fill="none" /><path d="M545.00,413.81 C551.67,413.36 558.33,412.51 565.00,413.35" stroke="#606060" stroke-width="0.65" fill="none" /><path d="M545.00,419.87 C551.67,420.46 558.33,421.47 565.00,420.81" stroke="#606060" stroke-width="0.65" fill="none" /><path d="M545.00,425.82 C551.67,425.06 558.33,425.30 565.00,425.23" stroke="#606060" stroke-width="0.65" fill="none" /><path d="M545.00,431.10 C551.67,430.87 558.33,431.43 565.00,430.61" stroke="#606060" stroke-width="0.65" fill="none" /><ellipse cx="585" cy="329.4" rx="13.5" ry="4.4" stroke="#e8281e" stroke-width="1.1" fill="none"/><text x="597.7" y="294" font-size="7.6" textLength="14.3" lengthAdjust="spacingAndGlyphs" font-weight="bold" fill="#111" font-family="Liberation Sans">KLIK</text><rect x="286.40" y="496.60" width="241.80" height="160.10" rx="0" stroke="#4a4a4a" stroke-width="1.1" fill="none"/><path d="M289.40,500.60 L314.80,499.90 L314.40,516.20 L289.70,516.80 Z" stroke="#888" stroke-width="0.6" fill="none" /><path d="M294.40,504.10 L309.40,513.10 M309.40,504.10 L294.40,513.10" stroke="#777" stroke-width="0.6" fill="none" /><rect x="316.10" y="505.30" width="23.00" height="8.90" rx="0" stroke="#8c8c8c" stroke-width="0.7" fill="none"/><text x="327.60" y="510.80" font-size="3.4" text-anchor="middle" font-weight="bold" fill="#111" font-family="Liberation Sans">FORSIDE</text><rect x="343.00" y="505.30" width="23.90" height="16.80" rx="0" stroke="#8c8c8c" stroke-width="0.7" fill="none"/><text x="354.90" y="510.80" font-size="3.4" text-anchor="middle" font-weight="bold" fill="#111" font-family="Liberation Sans">CE Markering</text><text x="354.90" y="515.20" font-size="3.4" text-anchor="middle" font-weight="bold" fill="#111" font-family="Liberation Sans">Generelt</text><text x="354.90" y="519.90" font-size="3.4" text-anchor="middle" font-weight="bold" fill="#111" font-family="Liberation Sans">Direktivlisten</text><rect x="370.40" y="505.30" width="24.20" height="22.00" rx="0" stroke="#8c8c8c" stroke-width="0.7" fill="none"/><text x="382.50" y="510.80" font-size="3.4" text-anchor="middle" font-weight="bold" fill="#111" font-family="Liberation Sans">Information</text><text x="382.50" y="515.20" font-size="3.4" text-anchor="middle" font-weight="bold" fill="#111" font-family="Liberation Sans">Eksport</text><text x="382.50" y="519.60" font-size="3.4" text-anchor="middle" font-weight="bold" fill="#111" font-family="Liberation Sans">Import</text><text x="382.50" y="524.00" font-size="3.4" text-anchor="middle" font-weight="bold" fill="#111" font-family="Liberation Sans">Langtidsopb.</text><rect x="397.60" y="505.30" width="22.50" height="8.60" rx="0" stroke="#8c8c8c" stroke-width="0.7" fill="none"/><text x="408.90" y="510.80" font-size="3.4" text-anchor="middle" font-weight="bold" fill="#111" font-family="Liberation Sans">Nyheder</text><rect x="426.10" y="505.20" width="21.80" height="16.40" rx="0" stroke="#8c8c8c" stroke-width="0.7" fill="none"/><text x="437.00" y="510.80" font-size="3.4" text-anchor="middle" font-weight="bold" fill="#111" font-family="Liberation Sans">Shop</text><text x="437.00" y="515.20" font-size="3.4" text-anchor="middle" font-weight="bold" fill="#111" font-family="Liberation Sans">Håndbøger</text><text x="437.00" y="519.60" font-size="3.4" text-anchor="middle" font-weight="bold" fill="#111" font-family="Liberation Sans">Forsiding</text><rect x="451.80" y="505.20" width="24.30" height="9.20" rx="0" stroke="#8c8c8c" stroke-width="0.7" fill="none"/><text x="463.90" y="510.80" font-size="3.4" text-anchor="middle" font-weight="bold" fill="#111" font-family="Liberation Sans">Kontakt</text><path d="M477.90,505.80 L481.90,505.40 L491.90,504.60 L491.90,512.40 L478.20,513.10 Z" stroke="#5a5a5a" stroke-width="0.6" fill="none" /><circle cx="480.60" cy="507.40" r="1.1" stroke="#5a5a5a" stroke-width="0.5" fill="none"/><path d="M478.70,512.10 Q480.60,508.10 482.70,512.10 M483.40,506.60 L490.90,506.10 M483.40,508.90 L490.90,508.40 M483.60,511.10 L490.90,510.60 M483.00,505.40 L483.00,512.60" stroke="#5a5a5a" stroke-width="0.5" fill="none" /><path d="M494.20,506.80 L507.90,506.80 L506.20,512.40 L495.90,512.40 Z M495.40,508.80 L506.90,508.80 M498.90,507.10 L498.90,512.10 M502.90,507.10 L502.90,512.10 M499.40,506.60 L502.90,502.90" stroke="#5a5a5a" stroke-width="0.6" fill="none" /><ellipse cx="517.90" cy="506.40" rx="3.8" ry="2.8" stroke="#5a5a5a" stroke-width="0.7" fill="none"/><path d="M515.60,508.60 L512.20,512.80" stroke="#5a5a5a" stroke-width="1.3" fill="none" stroke-linecap="round"/><path d="M286.40,644.20 H528.20" stroke="#aaa" stroke-width="0.8" fill="none" /><path d="M319.40,650.92 L319.73,650.87 L320.07,650.46 L320.40,649.86 L320.73,649.32 L321.07,649.08 L321.40,649.26 L321.73,649.81 L322.07,650.51 L322.40,651.07 L322.73,651.26 L323.07,650.99 L323.40,650.38 L323.73,649.70 L324.07,649.24 L324.40,649.20 L324.73,649.58 L325.07,650.23 L325.40,650.87 L325.73,651.24 L326.07,651.22 L326.40,650.83 L326.73,650.28 L327.07,649.79 L327.40,649.58 L327.73,649.71 L328.07,650.11 L328.40,650.60 L328.73,650.99 L329.07,651.14 L329.40,651.01 L329.73,650.69 L330.07,650.32 L330.40,650.06 L330.73,650.00 L331.07,650.17 L331.40,650.50 L331.73,650.86 L332.07,651.12 L332.40,651.18 L332.73,651.02 L333.07,650.69 L333.40,650.32 L333.73,650.09 L334.07,650.08 L334.40,650.35 L334.73,650.79 L335.07,651.24 L335.40,651.51 L335.73,651.47 L336.07,651.11 L336.40,650.57 L336.73,650.07 L337.07,649.83 L337.40,649.99 L337.73,650.49 L338.07,651.15 L338.40,651.68" stroke="#505050" stroke-width="0.6" fill="none" stroke-linejoin="round"/><path d="M347.10,649.36 L347.43,649.84 L347.77,650.55 L348.10,651.19 L348.43,651.51 L348.77,651.38 L349.10,650.89 L349.43,650.25 L349.77,649.75 L350.10,649.59 L350.43,649.82 L350.77,650.33 L351.10,650.90 L351.43,651.30 L351.77,651.39 L352.10,651.16 L352.43,650.74 L352.77,650.32 L353.10,650.06 L353.43,650.07 L353.77,650.32 L354.10,650.70 L354.43,651.06 L354.77,651.27 L355.10,651.25 L355.43,651.02 L355.77,650.69 L356.10,650.37 L356.43,650.21 L356.77,650.27 L357.10,650.55 L357.43,650.94 L357.77,651.29 L358.10,651.45 L358.43,651.35 L358.77,650.99 L359.10,650.52 L359.43,650.12 L359.77,649.99 L360.10,650.19 L360.43,650.67 L360.77,651.25 L361.10,651.67 L361.43,651.74 L361.77,651.40 L362.10,650.79 L362.43,650.14 L362.77,649.74 L363.10,649.75 L363.43,650.20 L363.77,650.87 L364.10,651.50 L364.43,651.81 L364.77,651.66 L365.10,651.12 L365.43,650.42 L365.77,649.85 L366.10,649.64 L366.43,649.85 L366.77,650.38 L367.10,650.98" stroke="#505050" stroke-width="0.6" fill="none" stroke-linejoin="round"/><path d="M377.40,649.91 L377.74,650.61 L378.08,651.06 L378.41,651.07 L378.75,650.64 L379.09,649.96 L379.43,649.33 L379.77,649.03 L380.11,649.17 L380.44,649.69 L380.78,650.35 L381.12,650.86 L381.46,651.03 L381.80,650.82 L382.14,650.33 L382.47,649.81 L382.81,649.48 L383.15,649.46 L383.49,649.74 L383.83,650.19 L384.17,650.62 L384.50,650.86 L384.84,650.83 L385.18,650.58 L385.52,650.22 L385.86,649.92 L386.20,649.79 L386.53,649.89 L386.87,650.18 L387.21,650.56 L387.55,650.88 L387.89,651.00 L388.23,650.88 L388.56,650.56 L388.90,650.17 L389.24,649.88 L389.58,649.83 L389.92,650.08 L390.26,650.55 L390.59,651.06 L390.93,651.39 L391.27,651.38 L391.61,651.02 L391.95,650.44 L392.29,649.91 L392.62,649.66 L392.96,649.83 L393.30,650.38 L393.64,651.08 L393.98,651.63 L394.32,651.79 L394.65,651.49 L394.99,650.86 L395.33,650.17 L395.67,649.73 L396.01,649.73 L396.35,650.17 L396.69,650.85 L397.02,651.47 L397.36,651.78 L397.70,651.65" stroke="#505050" stroke-width="0.6" fill="none" stroke-linejoin="round"/><path d="M409.80,650.11 L410.14,650.52 L410.47,651.06 L410.81,651.50 L411.15,651.63 L411.49,651.36 L411.82,650.78 L412.16,650.13 L412.50,649.68 L412.83,649.64 L413.17,650.03 L413.51,650.69 L413.85,651.34 L414.18,651.67 L414.52,651.55 L414.86,651.01 L415.19,650.29 L415.53,649.69 L415.87,649.45 L416.20,649.67 L416.54,650.22 L416.88,650.84 L417.22,651.28 L417.55,651.34 L417.89,651.01 L418.23,650.46 L418.56,649.92 L418.90,649.61 L419.24,649.62 L419.58,649.92 L419.91,650.35 L420.25,650.73 L420.59,650.89 L420.92,650.79 L421.26,650.47 L421.60,650.08 L421.94,649.76 L422.27,649.63 L422.61,649.74 L422.95,650.02 L423.28,650.37 L423.62,650.63 L423.96,650.69 L424.30,650.51 L424.63,650.14 L424.97,649.74 L425.31,649.45 L425.64,649.41 L425.98,649.66 L426.32,650.11 L426.65,650.57 L426.99,650.84 L427.33,650.77 L427.67,650.37 L428.00,649.78 L428.34,649.25 L428.68,649.03 L429.01,649.21 L429.35,649.76 L429.69,650.43 L430.03,650.95 L430.36,651.07 L430.70,650.73" stroke="#505050" stroke-width="0.6" fill="none" stroke-linejoin="round"/><path d="M440.10,649.67 L440.44,649.91 L440.77,650.28 L441.11,650.62 L441.45,650.81 L441.79,650.77 L442.12,650.51 L442.46,650.14 L442.80,649.80 L443.14,649.67 L443.47,649.82 L443.81,650.21 L444.15,650.71 L444.49,651.11 L444.82,651.23 L445.16,651.00 L445.50,650.50 L445.83,649.94 L446.17,649.58 L446.51,649.59 L446.85,650.01 L447.18,650.67 L447.52,651.30 L447.86,651.64 L448.20,651.52 L448.53,651.00 L448.87,650.30 L449.21,649.74 L449.55,649.55 L449.88,649.84 L450.22,650.46 L450.56,651.16 L450.89,651.64 L451.23,651.70 L451.57,651.35 L451.91,650.76 L452.24,650.19 L452.58,649.89 L452.92,649.96 L453.26,650.35 L453.59,650.88 L453.93,651.33 L454.27,651.51 L454.61,651.38 L454.94,651.02 L455.28,650.60 L455.62,650.29 L455.95,650.20 L456.29,650.37 L456.63,650.70 L456.97,651.06 L457.30,651.30 L457.64,651.33 L457.98,651.14 L458.32,650.79 L458.65,650.44 L458.99,650.21 L459.33,650.21 L459.67,650.46 L460.00,650.86 L460.34,651.25 L460.68,651.45 L461.01,651.36 L461.35,650.98 L461.69,650.45 L462.03,649.99 L462.36,649.81 L462.70,650.00 L463.04,650.51 L463.38,651.12 L463.71,651.56 L464.05,651.62 L464.39,651.25 L464.73,650.58 L465.06,649.90 L465.40,649.50" stroke="#505050" stroke-width="0.6" fill="none" stroke-linejoin="round"/><path d="M474.10,649.61 L474.43,649.84 L474.77,650.18 L475.10,650.49 L475.43,650.64 L475.77,650.56 L476.10,650.26 L476.43,649.86 L476.77,649.50 L477.10,649.35 L477.43,649.47 L477.77,649.85 L478.10,650.33 L478.43,650.72 L478.77,650.84 L479.10,650.60 L479.43,650.09 L479.77,649.50 L480.10,649.09 L480.43,649.04 L480.77,649.41 L481.10,650.04 L481.43,650.68 L481.77,651.06 L482.10,651.01 L482.43,650.54 L482.77,649.84 L483.10,649.23 L483.43,648.95 L483.77,649.13 L484.10,649.68 L484.43,650.37 L484.77,650.91 L485.10,651.09 L485.43,650.85 L485.77,650.32 L486.10,649.74 L486.43,649.35 L486.77,649.30 L487.10,649.60 L487.43,650.09 L487.77,650.58 L488.10,650.88 L488.43,650.88 L488.77,650.62 L489.10,650.23 L489.43,649.87 L489.77,649.70 L490.10,649.77 L490.43,650.05 L490.77,650.42 L491.10,650.75 L491.43,650.91 L491.77,650.85 L492.10,650.60 L492.43,650.25 L492.77,649.95 L493.10,649.84 L493.43,649.98 L493.77,650.34 L494.10,650.78 L494.43,651.15 L494.77,651.27 L495.10,651.08" stroke="#505050" stroke-width="0.6" fill="none" stroke-linejoin="round"/><text x="290.40" y="526.20" font-size="3.0" text-anchor="start" font-weight="bold" fill="#111" font-family="Liberation Sans" textLength="26" lengthAdjust="spacingAndGlyphs">forside / kontakt</text><rect x="308.20" y="529.90" width="69.90" height="13.60" rx="0" stroke="#8c8c8c" stroke-width="0.7" fill="none"/><path d="M314.00,534.91 L314.33,535.05 L314.67,535.58 L315.00,536.40 L315.33,537.33 L315.67,538.20 L316.00,538.84 L316.33,539.12 L316.67,539.01 L317.00,538.55 L317.33,537.84 L317.67,537.03 L318.00,536.28 L318.33,535.73 L318.67,535.46 L319.00,535.50 L319.33,535.82 L319.67,536.33 L320.00,536.92 L320.33,537.47 L320.67,537.90 L321.00,538.13 L321.33,538.13 L321.67,537.93 L322.00,537.56 L322.33,537.09 L322.67,536.59 L323.00,536.16 L323.33,535.86 L323.67,535.73 L324.00,535.81 L324.33,536.08 L324.67,536.52 L325.00,537.04 L325.33,537.55 L325.67,537.96 L326.00,538.17 L326.33,538.12 L326.67,537.79 L327.00,537.21 L327.33,536.49 L327.67,535.74 L328.00,535.11 L328.33,534.74 L328.67,534.72 L329.00,535.07 L329.33,535.74 L329.67,536.60 L330.00,537.48 L330.33,538.21 L330.67,538.63 L331.00,538.64 L331.33,538.25 L331.67,537.52 L332.00,536.59 L332.33,535.65 L332.67,534.88 L333.00,534.42 L333.33,534.36 L333.67,534.67 L334.00,535.29 L334.33,536.08 L334.67,536.87 L335.00,537.51 L335.33,537.89 L335.67,537.96 L336.00,537.73 L336.33,537.26 L336.67,536.66 L337.00,536.04 L337.33,535.53 L337.67,535.20 L338.00,535.09 L338.33,535.20 L338.67,535.51 L339.00,535.94 L339.33,536.42 L339.67,536.87 L340.00,537.22 L340.33,537.40 L340.67,537.39 L341.00,537.18 L341.33,536.80 L341.67,536.30 L342.00,535.77 L342.33,535.31 L342.67,535.01 L343.00,534.94 L343.33,535.15 L343.67,535.62 L344.00,536.28 L344.33,537.02 L344.67,537.69 L345.00,538.16 L345.33,538.32 L345.67,538.12 L346.00,537.58 L346.33,536.79 L346.67,535.90 L347.00,535.10 L347.33,534.54 L347.67,534.35 L348.00,534.58 L348.33,535.19 L348.67,536.06 L349.00,537.03 L349.33,537.89 L349.67,538.50 L350.00,538.74 L350.33,538.58 L350.67,538.07 L351.00,537.33 L351.33,536.52 L351.67,535.79 L352.00,535.29 L352.33,535.10 L352.67,535.23 L353.00,535.64 L353.33,536.22 L353.67,536.87 L354.00,537.46 L354.33,537.89 L354.67,538.11 L355.00,538.10 L355.33,537.87 L355.67,537.48 L356.00,537.02 L356.33,536.56 L356.67,536.18 L357.00,535.94 L357.33,535.89 L357.67,536.04 L358.00,536.38 L358.33,536.85 L358.67,537.38 L359.00,537.89 L359.33,538.27 L359.67,538.45 L360.00,538.37 L360.33,538.02 L360.67,537.46 L361.00,536.77 L361.33,536.08 L361.67,535.54 L362.00,535.26 L362.33,535.32 L362.67,535.74 L363.00,536.45 L363.33,537.32 L363.67,538.19 L364.00,538.87 L364.33,539.24 L364.67,539.19 L365.00,538.74 L365.33,537.97 L365.67,537.03 L366.00,536.11 L366.33,535.38 L366.67,534.99 L367.00,534.99 L367.33,535.39 L367.67,536.07 L368.00,536.89 L368.33,537.69 L368.67,538.31 L369.00,538.65 L369.33,538.65 L369.67,538.35 L370.00,537.81 L370.33,537.16 L370.67,536.52 L371.00,536.00" stroke="#555" stroke-width="0.6" fill="none" stroke-linejoin="round"/><rect x="308.50" y="546.40" width="69.10" height="67.70" rx="0" stroke="#8c8c8c" stroke-width="0.7" fill="none"/><path d="M314.00,551.86 L314.33,551.82 L314.67,551.63 L315.00,551.34 L315.33,550.99 L315.67,550.65 L316.00,550.40 L316.33,550.28 L316.67,550.33 L317.00,550.55 L317.33,550.92 L317.67,551.37 L318.00,551.80 L318.33,552.12 L318.67,552.24 L319.00,552.13 L319.33,551.78 L319.67,551.27 L320.00,550.70 L320.33,550.19 L320.67,549.88 L321.00,549.84 L321.33,550.10 L321.67,550.61 L322.00,551.28 L322.33,551.96 L322.67,552.49 L323.00,552.77 L323.33,552.72 L323.67,552.37 L324.00,551.80 L324.33,551.14 L324.67,550.54 L325.00,550.14 L325.33,550.02 L325.67,550.20 L326.00,550.62 L326.33,551.19 L326.67,551.78 L327.00,552.25 L327.33,552.54 L327.67,552.58 L328.00,552.41 L328.33,552.07 L328.67,551.65 L329.00,551.25 L329.33,550.95 L329.67,550.81 L330.00,550.84 L330.33,551.03 L330.67,551.34 L331.00,551.70 L331.33,552.05 L331.67,552.33 L332.00,552.47 L332.33,552.47 L332.67,552.31 L333.00,552.02 L333.33,551.66 L333.67,551.30 L334.00,551.02 L334.33,550.88 L334.67,550.94 L335.00,551.20 L335.33,551.63 L335.67,552.14 L336.00,552.63" stroke="#555" stroke-width="0.6" fill="none" stroke-linejoin="round"/><path d="M315.00,558.83 C333.33,558.36 351.67,557.35 370.00,558.07" stroke="#5c5c5c" stroke-width="0.65" fill="none" /><path d="M315.00,566.06 C333.33,565.66 351.67,566.99 370.00,567.10" stroke="#5c5c5c" stroke-width="0.65" fill="none" /><path d="M315.00,574.72 C333.33,576.15 351.67,576.30 370.00,575.50" stroke="#5c5c5c" stroke-width="0.65" fill="none" /><path d="M315.00,580.99 C333.33,580.34 351.67,580.36 370.00,580.73" stroke="#5c5c5c" stroke-width="0.65" fill="none" /><path d="M315.00,587.34 C333.33,588.18 351.67,589.03 370.00,588.32" stroke="#5c5c5c" stroke-width="0.65" fill="none" /><path d="M315.00,595.27 C333.33,595.77 351.67,596.22 370.00,594.66" stroke="#5c5c5c" stroke-width="0.65" fill="none" /><path d="M315.00,601.45 C333.33,602.46 351.67,602.07 370.00,601.59" stroke="#5c5c5c" stroke-width="0.65" fill="none" /><rect x="355.30" y="603.50" width="14.10" height="7.10" rx="0" stroke="#888" stroke-width="0.6" fill="none"/><text x="362.30" y="608.50" font-size="3.2" text-anchor="middle" font-weight="bold" fill="#111" font-family="Liberation Sans">&lt; 1 &gt;</text><rect x="386.40" y="527.80" width="126.30" height="87.60" rx="0" stroke="#8c8c8c" stroke-width="0.7" fill="none"/><path d="M396.10,537.27 C428.33,536.49 460.57,538.03 492.80,537.09" stroke="#707070" stroke-width="0.75" fill="none" /><path d="M396.40,544.78 C428.37,545.59 460.33,544.14 492.30,544.28" stroke="#707070" stroke-width="0.75" fill="none" /><path d="M396.10,537.30 L396.50,544.40 M492.80,537.30 Q493.60,540.85 492.50,544.40" stroke="#777" stroke-width="0.6" fill="none" /><path d="M401.50,541.52 L401.84,541.89 L402.17,542.15 L402.51,542.18 L402.85,541.98 L403.19,541.66 L403.52,541.37 L403.86,541.23 L404.20,541.30 L404.53,541.55 L404.87,541.85 L405.21,542.07 L405.55,542.10 L405.88,541.90 L406.22,541.56 L406.56,541.22 L406.90,541.05 L407.23,541.14 L407.57,541.46 L407.91,541.87 L408.24,542.17 L408.58,542.18 L408.92,541.87 L409.26,541.36 L409.59,540.89 L409.93,540.69 L410.27,540.86 L410.60,541.34 L410.94,541.90 L411.28,542.25 L411.62,542.19 L411.95,541.75 L412.29,541.12 L412.63,540.59 L412.97,540.43 L413.30,540.70 L413.64,541.25 L413.98,541.81 L414.31,542.10 L414.65,541.98 L414.99,541.51 L415.33,540.93 L415.66,540.51 L416.00,540.43" stroke="#555" stroke-width="0.55" fill="none" stroke-linejoin="round"/><path d="M397.50,552.38 C430.50,551.27 463.50,551.16 496.50,551.66" stroke="#707070" stroke-width="0.75" fill="none" /><path d="M397.80,558.91 C430.53,559.17 463.27,557.51 496.00,558.81" stroke="#707070" stroke-width="0.75" fill="none" /><path d="M397.50,552.10 L397.90,558.40 M496.50,552.10 Q497.30,555.25 496.20,558.40" stroke="#777" stroke-width="0.6" fill="none" /><path d="M402.00,555.82 L402.33,556.13 L402.67,556.31 L403.00,556.29 L403.33,556.06 L403.67,555.75 L404.00,555.48 L404.33,555.37 L404.67,555.48 L405.00,555.75 L405.33,556.06 L405.67,556.27 L406.00,556.26 L406.33,556.01 L406.67,555.62 L407.00,555.26 L407.33,555.09 L407.67,555.22 L408.00,555.60 L408.33,556.06 L408.67,556.36 L409.00,556.35 L409.33,555.99 L409.67,555.43 L410.00,554.93 L410.33,554.73 L410.67,554.92 L411.00,555.43 L411.33,556.01 L411.67,556.36 L412.00,556.32 L412.33,555.88 L412.67,555.26 L413.00,554.73 L413.33,554.54 L413.67,554.77 L414.00,555.28" stroke="#555" stroke-width="0.55" fill="none" stroke-linejoin="round"/><path d="M398.80,565.50 C431.37,564.92 463.93,565.42 496.50,564.84" stroke="#707070" stroke-width="0.75" fill="none" /><path d="M399.10,571.69 C431.40,573.49 463.70,572.68 496.00,572.33" stroke="#707070" stroke-width="0.75" fill="none" /><path d="M398.80,565.30 L399.20,572.30 M496.50,565.30 Q497.30,568.80 496.20,572.30" stroke="#777" stroke-width="0.6" fill="none" /><path d="M404.00,569.22 L404.33,569.49 L404.67,569.71 L405.00,569.77 L405.33,569.65 L405.67,569.38 L406.00,569.09 L406.33,568.90 L406.67,568.91 L407.00,569.12 L407.33,569.44 L407.67,569.73 L408.00,569.83 L408.33,569.67 L408.67,569.30 L409.00,568.88 L409.33,568.60 L409.67,568.61 L410.00,568.92 L410.33,569.38 L410.67,569.78 L411.00,569.90 L411.33,569.67 L411.67,569.18 L412.00,568.64 L412.33,568.32 L412.67,568.35 L413.00,568.73 L413.33,569.26 L413.67,569.68 L414.00,569.78 L414.33,569.52 L414.67,569.02 L415.00,568.51 L415.33,568.23 L415.67,568.28 L416.00,568.62 L416.33,569.06 L416.67,569.40 L417.00,569.46 L417.33,569.24 L417.67,568.86 L418.00,568.49 L418.33,568.29 L418.67,568.33 L419.00,568.57 L419.33,568.87 L419.67,569.10 L420.00,569.15" stroke="#555" stroke-width="0.55" fill="none" stroke-linejoin="round"/><path d="M422.8,567.6 L426.8,567.6 L424.8,570.6 Z" stroke="#111" stroke-width="0.4" fill="#111" /><path d="M401.00,577.51 C433.00,578.64 465.00,578.51 497.00,577.20" stroke="#707070" stroke-width="0.75" fill="none" /><path d="M400.50,601.45 C432.83,601.22 465.17,601.07 497.50,601.92" stroke="#707070" stroke-width="0.75" fill="none" /><path d="M401.5,577.6 Q402.5,590 401.8,601.5 M496.8,577.6 Q496,590 497.2,601.5" stroke="#777" stroke-width="0.6" fill="none" /><rect x="481.00" y="605.40" width="21.50" height="6.10" rx="0" stroke="#777" stroke-width="0.6" fill="none"/><text x="491.70" y="609.40" font-size="2.4" text-anchor="middle" font-weight="bold" fill="#111" font-family="Liberation Sans">SEND BESKED</text><ellipse cx="491" cy="608.2" rx="13.5" ry="4.4" stroke="#e8281e" stroke-width="1.1" fill="none"/><text x="436" y="628.2" font-size="7.6" textLength="14.6" lengthAdjust="spacingAndGlyphs" font-weight="bold" fill="#111" font-family="Liberation Sans">KLIK</text><path d="M357,164 L528.8,311.9" stroke="#e8281e" stroke-width="1.4" fill="none" /><path d="M403.5,240 L528.8,311.9" stroke="#e8281e" stroke-width="1.4" fill="none" /><path d="M528.8,311.9 L528.8,311.9 M528.3,305 L528.8,311.9 L521.9,312.8" stroke="#e8281e" stroke-width="1.35" fill="none" stroke-linecap="round" stroke-linejoin="round"/><circle cx="532.6" cy="315.8" r="4.4" fill="#e8281e"/><path d="M576.7,333.9 L381.8,491" stroke="#e8281e" stroke-width="1.4" fill="none" /><path d="M381.8,491 L381.8,491 M382.5,484.2 L381.8,491 L389,492.5" stroke="#e8281e" stroke-width="1.35" fill="none" stroke-linecap="round" stroke-linejoin="round"/><circle cx="377.3" cy="495.7" r="4.5" fill="#e8281e"/><path d="M315.2,176.7 L337.6,163.7 M331,163 L337.6,163.7 L335.5,170" stroke="#e8281e" stroke-width="1.35" fill="none" stroke-linecap="round" stroke-linejoin="round"/><path d="M354.8,260 L376.5,246.6 M369,245.9 L376.5,246.6 L374.6,253.7" stroke="#e8281e" stroke-width="1.35" fill="none" stroke-linecap="round" stroke-linejoin="round"/><path d="M604.5,300.4 L591,320.4 M590.5,313 L591,320.4 L598,318" stroke="#e8281e" stroke-width="1.35" fill="none" stroke-linecap="round" stroke-linejoin="round"/><path d="M456.3,626.2 L478.1,611.8 M471,611.5 L478.1,611.8 L476,618.5" stroke="#e8281e" stroke-width="1.35" fill="none" stroke-linecap="round" stroke-linejoin="round"/></svg>
</div>
</body></html>
